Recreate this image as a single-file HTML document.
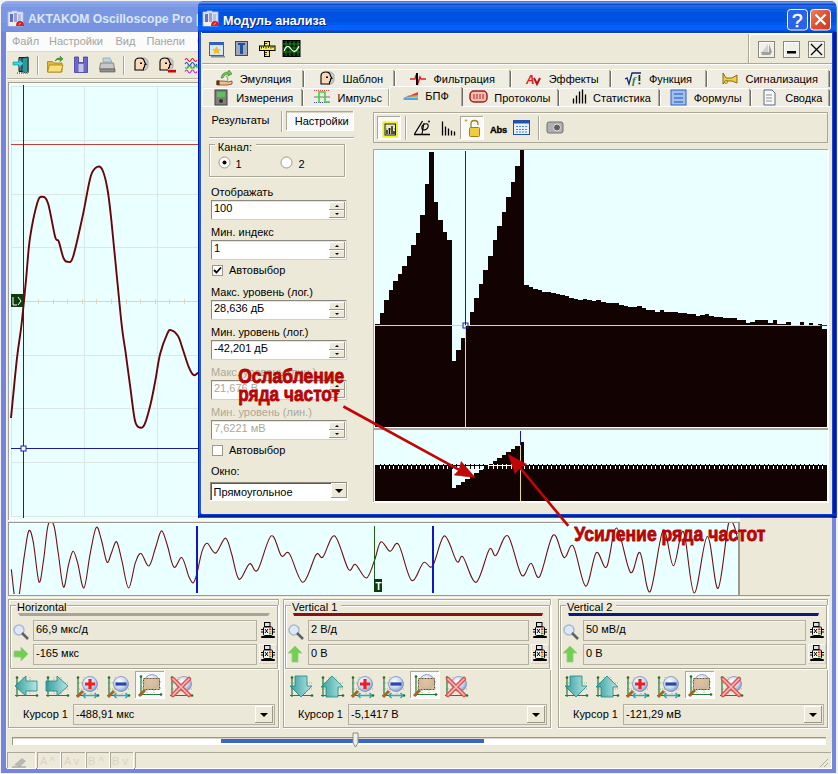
<!DOCTYPE html><html><head><meta charset="utf-8"><title>Модуль анализа</title><style>html,body{margin:0;padding:0;background:#ece9d8;overflow:hidden;width:838px;height:774px}svg{display:block}text{font-family:"Liberation Sans",sans-serif}</style></head><body><svg width="838" height="774" viewBox="0 0 838 774" font-family="Liberation Sans, sans-serif"><defs><linearGradient id="teal" x1="0" y1="0" x2="1" y2="0"><stop offset="0" stop-color="#2a9c9c"/><stop offset="1" stop-color="#b4e6e6"/></linearGradient><radialGradient id="glass" cx="0.4" cy="0.35" r="0.7"><stop offset="0" stop-color="#ffffff"/><stop offset="0.6" stop-color="#c8d8f0"/><stop offset="1" stop-color="#7890c8"/></radialGradient></defs>
<rect x="0" y="0" width="838" height="774" fill="#ece9d8" />
<defs><linearGradient id="tin" x1="0" y1="0" x2="0" y2="1"><stop offset="0" stop-color="#a9c0f0"/><stop offset="0.12" stop-color="#8aa6e6"/><stop offset="0.5" stop-color="#7c98e0"/><stop offset="1" stop-color="#7b95dd"/></linearGradient><linearGradient id="tact" x1="0" y1="0" x2="0" y2="1"><stop offset="0" stop-color="#3b8cff"/><stop offset="0.1" stop-color="#0a5ef0"/><stop offset="0.5" stop-color="#0552e6"/><stop offset="0.9" stop-color="#0446d8"/><stop offset="1" stop-color="#0338b8"/></linearGradient></defs>
<rect x="0" y="0" width="838" height="774" fill="#f2f2f2" />
<path d="M1,8 Q1,1.5 8,1.5 L829,1.5 Q836,1.5 836,8 L836,773 L1,773 Z" fill="#7584dc"/>
<clipPath id="mwclip"><path d="M1,8 Q1,1 8,1 L829,1 Q836,1 836,8 L836,773 L1,773 Z"/></clipPath>
<g clip-path="url(#mwclip)">
<rect x="0" y="0" width="838" height="1.5" fill="#a8acc8" />
<rect x="0" y="1.5" width="838" height="1" fill="#98b4f0" />
<rect x="0" y="2.5" width="838" height="2" fill="#8eacee" />
<rect x="0" y="4.5" width="838" height="3" fill="#829fe6" />
<rect x="0" y="7.5" width="838" height="16" fill="#7a97e1" />
<rect x="0" y="23.5" width="838" height="8" fill="#7894e0" />
<rect x="0" y="31.5" width="838" height="1" fill="#7090d8" />
</g>
<text x="28" y="23" font-size="12.2" fill="#dce6f8" font-weight="bold" >AKTAKOM Oscilloscope Pro |</text>
<path d="M8,12 h4 v-1 h5 v1 h6 v14 h-15z" fill="#dfe2f6" stroke="#b0c0f0" stroke-width="0.8"/><rect x="10" y="14" width="3" height="8" fill="#6070c0"/><rect x="14" y="13" width="3" height="9" fill="#9aa0d8"/><rect x="18" y="14" width="3" height="8" fill="#b8c0e8"/><rect x="9" y="22" width="7" height="4" fill="#f0f0e0"/><path d="M16,26 q0,-5 4,-5 q4,0 4,5z" fill="#d82020"/><path d="M19,25 q0,-2 2,-2" stroke="#f8a080" fill="none"/>
<rect x="1" y="32" width="5" height="741" fill="#7584dc" />
<rect x="6" y="32" width="1" height="736" fill="#f4f6fc" />
<rect x="832" y="32" width="4" height="741" fill="#7584dc" />
<rect x="1" y="769" width="835" height="4" fill="#7584dc" />
<rect x="6" y="767" width="826" height="1" fill="#f4f6fc" />
<rect x="7" y="32" width="825" height="736" fill="#ece9d8" />
<rect x="7" y="32" width="825" height="20" fill="#fbfbfa" />
<rect x="7" y="51" width="825" height="1" fill="#dcd9cc" />
<text x="12" y="45" font-size="11" fill="#a4a4a4" font-weight="normal" >Файл</text>
<text x="49" y="45" font-size="11" fill="#a4a4a4" font-weight="normal" >Настройки</text>
<text x="115.5" y="45" font-size="11" fill="#a4a4a4" font-weight="normal" >Вид</text>
<text x="146.5" y="45" font-size="11" fill="#a4a4a4" font-weight="normal" >Панели</text>
<text x="197" y="45" font-size="11" fill="#a4a4a4" font-weight="normal" >Справка</text>
<rect x="7" y="78" width="825" height="1" fill="#b8b4a4" />
<rect x="7" y="79" width="825" height="1" fill="#fafaf6" />
<rect x="37" y="56" width="1" height="19" fill="#aca899" />
<rect x="38" y="56" width="1" height="19" fill="#ffffff" />
<rect x="123" y="56" width="1" height="19" fill="#aca899" />
<rect x="124" y="56" width="1" height="19" fill="#ffffff" />
<path d="M19,57.5 h9 v14 h-9z" fill="#607080" stroke="#101820" stroke-width="1"/><path d="M22,58 l6,-1 v16 l-6,-1z" fill="#2a9a9a" stroke="#101820" stroke-width="0.8"/><path d="M13,62 h6 v-2.5 l4.5,4 -4.5,4 v-2.5 h-6z" fill="#30d8e8" stroke="#108898" stroke-width="0.6"/><path d="M17,73 h12" stroke="#909090" stroke-width="2" stroke-dasharray="1,1"/>
<path d="M47.5,61.5 h5 l1.5,1.5 h8 v9 h-14.5z" fill="#e0b840" stroke="#a88010" stroke-width="0.8"/><path d="M47.5,72 l2,-7 h13.5 l-2,7z" fill="#f8e078" stroke="#a88010" stroke-width="0.8"/><path d="M55,61 q2,-4 6,-3 l-1,-2 3,3 -3,2.5 0,-2 q-3,-0.5 -5,1.5z" fill="#38b038" stroke="#207020" stroke-width="0.5"/>
<path d="M74.5,57 h4 v5.5 h5 v-5.5 h4 v15.5 h-13z" fill="#6a68c8" stroke="#4040a0" stroke-width="0.8"/><rect x="78.5" y="64" width="5" height="8" fill="#c0c4e8"/>
<path d="M103,58 h7 l2,4 h-9z" fill="#b8d8f0" stroke="#8090a0" stroke-width="0.6"/><path d="M100.5,63 h13 l1,6 h-15z" fill="#c8c8c8" stroke="#707070" stroke-width="0.8"/><path d="M100,69 h15 v3 h-15z" fill="#909090" stroke="#505050" stroke-width="0.6"/>
<path d="M141,58 q5,-1 7,3 v6 l-2,3 h-5z" fill="#c8c8c8" stroke="#a0a0a0" stroke-width="0.8"/>
<path d="M135,62 q0,-4 5,-4 q4,0 4.5,4 l1.5,2.5 -1.5,0.5 v2 l-1,1 v2 h-8.5z" fill="#f8d8b8" stroke="#000" stroke-width="1.1"/><rect x="140" y="62.5" width="2" height="1.5" fill="#000"/>
<path d="M166,58 q5,-1 7,3 v6 l-2,3 h-5z" fill="#c8c8c8" stroke="#a0a0a0" stroke-width="0.8"/>
<path d="M160,62 q0,-4 5,-4 q4,0 4.5,4 l1.5,2.5 -1.5,0.5 v2 l-1,1 v2 h-8.5z" fill="#f8d8b8" stroke="#000" stroke-width="1.1"/><rect x="165" y="62.5" width="2" height="1.5" fill="#000"/>
<rect x="168" y="70" width="8" height="2.5" fill="#c80808" />
<rect x="168" y="69" width="8" height="1" fill="#f0d040" />
<path d="M185,60 q1.5,-3 3,0 t3,0 t3,0 t3,0" stroke="#d02020" fill="none" stroke-width="1.1"/><path d="M185,64 q1.5,-3 3,0 t3,0 t3,0 t3,0" stroke="#2040d0" fill="none" stroke-width="1.1"/><path d="M185,68 h3 v-2 h3 v2 h3 v-2 h3 v2" stroke="#20a020" fill="none" stroke-width="1.1"/><path d="M185,71.5 q1.5,-3 3,0 t3,0 t3,0 t3,0" stroke="#c020c0" fill="none" stroke-width="1.1"/>
<rect x="8" y="82" width="732" height="439" fill="#a4a096" />
<rect x="9" y="83" width="731" height="437" fill="#eaffff" />
<rect x="11" y="86" width="1" height="431" fill="#dce6e2" />
<rect x="84" y="86" width="1" height="431" fill="#dce6e2" />
<rect x="157" y="86" width="1" height="431" fill="#dce6e2" />
<rect x="229" y="86" width="1" height="431" fill="#dce6e2" />
<rect x="302" y="86" width="1" height="431" fill="#dce6e2" />
<rect x="375" y="86" width="1" height="431" fill="#dce6e2" />
<rect x="448" y="86" width="1" height="431" fill="#dce6e2" />
<rect x="521" y="86" width="1" height="431" fill="#dce6e2" />
<rect x="593" y="86" width="1" height="431" fill="#dce6e2" />
<rect x="666" y="86" width="1" height="431" fill="#dce6e2" />
<rect x="739" y="86" width="1" height="431" fill="#dce6e2" />
<rect x="11" y="86" width="728" height="1" fill="#dce6e2" />
<rect x="11" y="140" width="728" height="1" fill="#dce6e2" />
<rect x="11" y="194" width="728" height="1" fill="#dce6e2" />
<rect x="11" y="247" width="728" height="1" fill="#dce6e2" />
<rect x="11" y="301" width="728" height="1" fill="#dce6e2" />
<rect x="11" y="355" width="728" height="1" fill="#dce6e2" />
<rect x="11" y="408" width="728" height="1" fill="#dce6e2" />
<rect x="11" y="462" width="728" height="1" fill="#dce6e2" />
<rect x="11" y="516" width="728" height="1" fill="#dce6e2" />
<rect x="11" y="144" width="728" height="1" fill="#c83c3c" />
<rect x="24" y="301" width="715" height="1" fill="#e2d2b8" />
<rect x="38" y="299" width="1" height="5" fill="#e2d6c0" />
<rect x="53" y="299" width="1" height="5" fill="#e2d6c0" />
<rect x="67" y="299" width="1" height="5" fill="#e2d6c0" />
<rect x="82" y="299" width="1" height="5" fill="#e2d6c0" />
<rect x="96" y="299" width="1" height="5" fill="#e2d6c0" />
<rect x="111" y="299" width="1" height="5" fill="#e2d6c0" />
<rect x="126" y="299" width="1" height="5" fill="#e2d6c0" />
<rect x="140" y="299" width="1" height="5" fill="#e2d6c0" />
<rect x="155" y="299" width="1" height="5" fill="#e2d6c0" />
<rect x="169" y="299" width="1" height="5" fill="#e2d6c0" />
<rect x="184" y="299" width="1" height="5" fill="#e2d6c0" />
<rect x="199" y="299" width="1" height="5" fill="#e2d6c0" />
<rect x="213" y="299" width="1" height="5" fill="#e2d6c0" />
<rect x="228" y="299" width="1" height="5" fill="#e2d6c0" />
<rect x="242" y="299" width="1" height="5" fill="#e2d6c0" />
<rect x="257" y="299" width="1" height="5" fill="#e2d6c0" />
<rect x="272" y="299" width="1" height="5" fill="#e2d6c0" />
<rect x="286" y="299" width="1" height="5" fill="#e2d6c0" />
<rect x="301" y="299" width="1" height="5" fill="#e2d6c0" />
<rect x="315" y="299" width="1" height="5" fill="#e2d6c0" />
<rect x="330" y="299" width="1" height="5" fill="#e2d6c0" />
<rect x="345" y="299" width="1" height="5" fill="#e2d6c0" />
<rect x="359" y="299" width="1" height="5" fill="#e2d6c0" />
<rect x="374" y="299" width="1" height="5" fill="#e2d6c0" />
<rect x="388" y="299" width="1" height="5" fill="#e2d6c0" />
<rect x="403" y="299" width="1" height="5" fill="#e2d6c0" />
<rect x="418" y="299" width="1" height="5" fill="#e2d6c0" />
<rect x="432" y="299" width="1" height="5" fill="#e2d6c0" />
<rect x="447" y="299" width="1" height="5" fill="#e2d6c0" />
<rect x="461" y="299" width="1" height="5" fill="#e2d6c0" />
<rect x="476" y="299" width="1" height="5" fill="#e2d6c0" />
<rect x="491" y="299" width="1" height="5" fill="#e2d6c0" />
<rect x="505" y="299" width="1" height="5" fill="#e2d6c0" />
<rect x="520" y="299" width="1" height="5" fill="#e2d6c0" />
<rect x="534" y="299" width="1" height="5" fill="#e2d6c0" />
<rect x="549" y="299" width="1" height="5" fill="#e2d6c0" />
<rect x="564" y="299" width="1" height="5" fill="#e2d6c0" />
<rect x="578" y="299" width="1" height="5" fill="#e2d6c0" />
<rect x="593" y="299" width="1" height="5" fill="#e2d6c0" />
<rect x="607" y="299" width="1" height="5" fill="#e2d6c0" />
<rect x="622" y="299" width="1" height="5" fill="#e2d6c0" />
<rect x="637" y="299" width="1" height="5" fill="#e2d6c0" />
<rect x="651" y="299" width="1" height="5" fill="#e2d6c0" />
<rect x="666" y="299" width="1" height="5" fill="#e2d6c0" />
<rect x="680" y="299" width="1" height="5" fill="#e2d6c0" />
<rect x="695" y="299" width="1" height="5" fill="#e2d6c0" />
<rect x="710" y="299" width="1" height="5" fill="#e2d6c0" />
<rect x="724" y="299" width="1" height="5" fill="#e2d6c0" />
<rect x="739" y="299" width="1" height="5" fill="#e2d6c0" />
<rect x="753" y="299" width="1" height="5" fill="#e2d6c0" />
<rect x="23" y="85" width="1" height="433" fill="#1c1ca0" />
<rect x="11" y="448" width="728" height="1" fill="#1c1ca0" />
<clipPath id="scc"><rect x="9" y="83" width="731" height="436"/></clipPath><path clip-path="url(#scc)" d="M11,418 C12.0,408.1 15.1,374.6 16.9,358.8 C18.7,343.0 20.2,336.1 21.7,323 C23.2,309.9 24.6,294.2 26,280 C27.4,265.8 28.1,250.7 30,237.9 C31.9,225.1 35.2,210.0 37.2,203.2 C39.2,196.3 40.2,196.8 42,196.8 C43.8,196.8 45.8,196.5 48,203.2 C50.2,209.8 53.3,230.3 55.1,236.7 C56.9,243.1 57.3,237.8 58.7,241.4 C60.1,245.0 62.0,254.7 63.5,258.1 C65.0,261.5 65.9,261.9 67.5,261.7 C69.1,261.5 70.5,264.6 73,257 C75.5,249.4 79.6,229.9 82.6,216.4 C85.6,202.9 88.3,184.1 90.9,175.8 C93.5,167.5 96.0,167.5 98,166.7 C100.0,165.9 101.3,167.1 102.9,171 C104.5,174.9 106.2,182.0 107.6,190 C109.0,198.0 109.6,203.8 111.2,218.8 C112.8,233.8 115.4,261.9 117.2,280 C119.0,298.1 120.6,315.8 122,327.7 C123.4,339.6 124.1,341.7 125.5,351.6 C126.9,361.6 128.7,375.9 130.3,387.4 C131.9,398.9 133.4,414.1 135,420.8 C136.6,427.5 138.2,426.9 139.8,427.5 C141.4,428.1 142.8,428.3 144.6,424.4 C146.4,420.5 148.8,411.4 150.6,404 C152.4,396.6 153.8,388.5 155.4,380.2 C157.0,371.9 158.1,361.8 160.1,354 C162.1,346.2 165.5,337.7 167.3,333.7 C169.1,329.7 169.1,329.7 170.9,330.1 C172.7,330.5 176.0,332.8 178,336 C180.0,339.2 181.0,344.0 182.8,349.2 C184.6,354.4 187.0,362.8 188.8,367.1 C190.6,371.4 192.0,374.0 193.5,375 C195.0,376.0 195.9,374.2 197.8,373 C199.7,371.8 203.8,368.8 205,368" fill="none" stroke="#680606" stroke-width="1.9" stroke-linejoin="round"/>
<rect x="21" y="446" width="5" height="5" fill="#eaffff" stroke="#1c1ca0" stroke-width="1"/>
<rect x="11" y="294" width="12" height="13" fill="#0c3c0c" />
<path d="M13,297 v8 h4 M18,297 l3,4 -3,4" stroke="#fff" fill="none" stroke-width="1"/>
<rect x="8" y="520" width="732" height="1" fill="#ffffff" />
<rect x="8" y="522" width="732" height="74" fill="#9c9a90" />
<rect x="9" y="523" width="729" height="72" fill="#eaffff" />
<rect x="8" y="595" width="822" height="1" fill="#9c9a90" />
<rect x="8" y="597" width="822" height="1" fill="#ffffff" />
<clipPath id="ovc"><rect x="9" y="523" width="729" height="71"/></clipPath>
<path clip-path="url(#ovc)" d="M11.3,569.4 C12.2,575.3 14.8,607.3 17,605 C19.2,602.7 22.3,568.1 24.3,555.8 C26.3,543.4 27.3,533.2 28.8,530.9 C30.3,528.6 31.6,533.7 33.3,542.2 C35.0,550.7 37.3,578.9 39,581.9 C40.7,584.9 42.0,569.8 43.5,560.4 C45.0,551.0 46.4,531.1 48.1,525.2 C49.8,519.3 52.1,520.5 53.8,525.2 C55.5,529.9 56.7,543.2 58.3,553.5 C59.9,563.8 61.8,585.2 63.5,587.1 C65.2,589.0 66.9,570.9 68.5,564.9 C70.1,558.9 71.5,551.7 73,551.3 C74.5,550.9 75.8,556.5 77.6,562.6 C79.4,568.7 81.8,589.3 83.9,588 C86.0,586.7 88.0,564.8 90,554.7 C92.0,544.6 94.3,530.0 96.2,527.5 C98.1,525.0 99.6,534.2 101.4,540 C103.2,545.8 105.3,560.1 107,562.2 C108.7,564.3 110.0,555.8 111.6,552.4 C113.2,549.0 114.9,540.5 116.6,541.8 C118.3,543.1 119.8,552.7 121.8,560.4 C123.8,568.1 126.3,587.6 128.6,588 C130.9,588.4 133.3,568.4 135.4,562.6 C137.5,556.9 138.7,552.9 141,553.5 C143.3,554.1 146.5,567.1 149,566 C151.5,564.9 153.7,552.6 155.8,546.7 C157.9,540.9 159.6,531.3 161.5,530.9 C163.4,530.5 165.0,538.5 167.1,544.5 C169.2,550.5 171.4,565.0 173.9,567.2 C176.4,569.4 179.4,556.1 181.9,557.6 C184.4,559.1 186.8,572.0 188.7,576.2 C190.6,580.4 191.8,583.4 193.2,583 C194.5,582.6 195.3,579.3 196.8,574 C198.3,568.7 200.3,556.4 202,551.3 C203.7,546.2 204.9,543.0 207.2,543.3 C209.5,543.6 212.6,554.0 215.6,553.1 C218.6,552.2 222.8,538.0 225.4,538.1 C228.1,538.2 229.2,546.6 231.5,553.5 C233.8,560.4 236.0,577.5 239,579.2 C242.0,580.9 246.5,565.3 249.6,563.8 C252.7,562.3 254.0,574.8 257.6,570.1 C261.2,565.5 267.2,538.3 271.2,535.9 C275.2,533.5 278.4,552.9 281.4,555.8 C284.4,558.7 285.7,549.1 289.3,553.5 C292.9,557.9 298.4,582.1 302.9,582.3 C307.4,582.5 312.8,558.9 316.1,554.7 C319.4,550.5 319.8,560.1 322.9,557 C326.0,553.9 330.5,533.9 334.7,535.9 C338.9,537.9 344.8,564.2 348.3,569 C351.8,573.8 352.5,562.9 355.5,564.4 C358.5,565.9 363.2,578.7 366.4,578 C369.6,577.3 372.1,566.4 374.5,560.4 C376.9,554.4 378.3,543.3 380.9,541.8 C383.5,540.3 387.1,550.8 390,551.3 C392.9,551.8 395.0,539.7 398.6,544.5 C402.2,549.3 407.4,577.3 411.5,580.3 C415.6,583.3 420.0,565.0 423.5,562.6 C427.0,560.2 429.1,570.5 432.6,566 C436.1,561.5 440.4,536.6 444.4,535.9 C448.4,535.1 453.7,558.0 456.8,561.5 C459.9,565.0 459.8,553.5 463,557 C466.2,560.5 471.7,583.5 476.1,582.3 C480.5,581.0 486.0,554.0 489.3,549.5 C492.6,545.0 492.9,557.7 496,555.4 C499.1,553.1 503.6,532.6 507.9,535.9 C512.1,539.2 517.6,570.5 521.5,575.1 C525.4,579.7 528.0,563.0 531,563.3 C534.0,563.6 535.9,581.4 539.6,576.7 C543.3,572.0 549.1,538.2 553.2,535 C557.3,531.8 560.7,555.7 564,557.5 C567.3,559.3 569.6,541.2 573.2,546 C576.8,550.8 581.8,585.0 585.6,586.1 C589.5,587.2 592.8,555.9 596.3,552.7 C599.8,549.5 603.2,571.1 606.6,567 C610.0,562.9 612.6,527.1 616.6,528 C620.6,528.9 626.5,568.2 630.4,572.3 C634.3,576.4 636.7,549.5 640,552.7 C643.3,556.0 646.1,595.5 650,591.8 C653.9,588.1 659.2,534.8 663.1,530.5 C667.0,526.2 670.0,565.6 673.4,565.8 C676.8,566.0 679.9,527.2 683.4,531.7 C686.9,536.2 690.2,592.2 694.2,593 C698.2,593.8 703.3,537.2 707.3,536.5 C711.3,535.8 714.5,590.5 718,588.5 C721.5,586.5 725.7,535.2 728.3,524.5 C730.9,513.8 731.9,521.9 733.5,524.5 C735.1,527.1 737.2,537.4 738,540" fill="none" stroke="#6e1010" stroke-width="1.1"/>
<rect x="196" y="526" width="2" height="67" fill="#1414c8" />
<rect x="432" y="526" width="2" height="67" fill="#1414c8" />
<rect x="374" y="526" width="1" height="53" fill="#1c601c" />
<rect x="374" y="579" width="8" height="13" fill="#0c3c0c" />
<text x="375.5" y="590" font-size="10" fill="#fff" font-weight="bold" >T</text>
<rect x="8" y="599" width="272" height="1" fill="#aca899" />
<rect x="8" y="599" width="1" height="130" fill="#aca899" />
<rect x="9" y="600" width="270" height="1" fill="#ffffff" />
<rect x="9" y="600" width="1" height="128" fill="#ffffff" />
<rect x="8" y="728" width="272" height="1" fill="#ffffff" />
<rect x="279" y="599" width="1" height="130" fill="#ffffff" />
<rect x="9" y="727" width="270" height="1" fill="#aca899" />
<rect x="278" y="600" width="1" height="128" fill="#aca899" />
<rect x="10" y="605" width="6" height="1" fill="#aca899" />
<rect x="11" y="606" width="5" height="1" fill="#ffffff" />
<rect x="67" y="605" width="210" height="1" fill="#aca899" />
<rect x="67" y="606" width="210" height="1" fill="#ffffff" />
<rect x="10" y="605" width="1" height="63" fill="#aca899" />
<rect x="11" y="606" width="1" height="62" fill="#ffffff" />
<rect x="277" y="605" width="1" height="63" fill="#aca899" />
<rect x="278" y="605" width="1" height="64" fill="#ffffff" />
<rect x="10" y="668" width="268" height="1" fill="#aca899" />
<rect x="10" y="669" width="269" height="1" fill="#ffffff" />
<text x="17" y="610.5" font-size="11" fill="#000" font-weight="normal" >Horizontal</text>
<path d="M18,613 H270 l-2,3 H20z" fill="#a8a498"/>
<rect x="33" y="620" width="224" height="21" fill="#ebe8d9" />
<rect x="33" y="620" width="224" height="1" fill="#b4b0a0" />
<rect x="33" y="640" width="224" height="1" fill="#b4b0a0" />
<rect x="33" y="620" width="1" height="21" fill="#b4b0a0" />
<rect x="256" y="620" width="1" height="21" fill="#b4b0a0" />
<rect x="34" y="621" width="222" height="1" fill="#f6f4ec" />
<text x="36" y="633" font-size="11" fill="#000" font-weight="normal" >66,9 мкс/д</text>
<rect x="33" y="644" width="224" height="21" fill="#ebe8d9" />
<rect x="33" y="644" width="224" height="1" fill="#b4b0a0" />
<rect x="33" y="664" width="224" height="1" fill="#b4b0a0" />
<rect x="33" y="644" width="1" height="21" fill="#b4b0a0" />
<rect x="256" y="644" width="1" height="21" fill="#b4b0a0" />
<rect x="34" y="645" width="222" height="1" fill="#f6f4ec" />
<text x="36" y="657" font-size="11" fill="#000" font-weight="normal" >-165 мкс</text>
<rect x="264.5" y="622.5" width="5.5" height="4" fill="#e0e0e0" stroke="#000" stroke-width="1"/><rect x="263.5" y="627" width="9" height="8.5" rx="1" fill="#f4f4f4" stroke="#000" stroke-width="1"/><path d="M265,629 l3,4 M268,629 l-3,4" stroke="#000" stroke-width="1"/><rect x="269" y="628.5" width="2.5" height="1.6" fill="#e03020"/><rect x="269" y="630.6" width="2.5" height="1.6" fill="#f0a020"/><rect x="269" y="632.7" width="2.5" height="1.6" fill="#40a020"/><path d="M261,629.5 h2 M261,632 h2 M273,629.5 h2 M273,632 h2" stroke="#000" stroke-width="1"/><rect x="261" y="636" width="14" height="2" rx="1" fill="#000"/>
<rect x="259" y="644" width="18" height="1" fill="#f8f8f4" />
<rect x="259" y="644" width="1" height="20" fill="#f8f8f4" />
<rect x="259" y="663" width="18" height="1" fill="#d8d4c4" />
<rect x="276" y="644" width="1" height="20" fill="#d8d4c4" />
<rect x="264.5" y="645.5" width="5.5" height="4" fill="#e0e0e0" stroke="#000" stroke-width="1"/><rect x="263.5" y="650" width="9" height="8.5" rx="1" fill="#f4f4f4" stroke="#000" stroke-width="1"/><path d="M265,652 l3,4 M268,652 l-3,4" stroke="#000" stroke-width="1"/><rect x="269" y="651.5" width="2.5" height="1.6" fill="#e03020"/><rect x="269" y="653.6" width="2.5" height="1.6" fill="#f0a020"/><rect x="269" y="655.7" width="2.5" height="1.6" fill="#40a020"/><path d="M261,652.5 h2 M261,655 h2 M273,652.5 h2 M273,655 h2" stroke="#000" stroke-width="1"/><rect x="261" y="659" width="14" height="2" rx="1" fill="#000"/>
<circle cx="19" cy="630" r="5" fill="#dde8f8" stroke="#a8b8d8" stroke-width="1.5"/><path d="M22,633 l6,6" stroke="#606060" stroke-width="2.5"/>
<path d="M14,651 h7 v-4 l7,7 -7,7 v-4 h-7z" fill="#70d050" stroke="#a0c890" stroke-width="0.8"/>
<path d="M23,677 v20 M30,677 v20 M16,683 h22 M16,689 h22" stroke="#90c090" stroke-width="1" stroke-dasharray="1,1" fill="none"/>
<path d="M17,677 v20 M15,695.5 h23" stroke="#2a7a3a" stroke-width="1.2" fill="none"/><circle cx="17" cy="677.5" r="1.3" fill="#2a6a2a"/><circle cx="37" cy="695.5" r="1.3" fill="#2a6a2a"/>
<path d="M15,686 l11,-10 v5 h11 v10 h-11 v5z" fill="url(#teal)" stroke="#1c8484" stroke-width="0.8" fill-opacity="0.95"/>
<path d="M54,677 v20 M61,677 v20 M47,683 h22 M47,689 h22" stroke="#90c090" stroke-width="1" stroke-dasharray="1,1" fill="none"/>
<path d="M48,677 v20 M46,695.5 h23" stroke="#2a7a3a" stroke-width="1.2" fill="none"/><circle cx="48" cy="677.5" r="1.3" fill="#2a6a2a"/><circle cx="68" cy="695.5" r="1.3" fill="#2a6a2a"/>
<path d="M68,686 l-11,-10 v5 h-11 v10 h11 v5z" fill="url(#teal)" stroke="#1c8484" stroke-width="0.8" fill-opacity="0.95"/>
<path d="M84,677 v20 M91,677 v20 M77,683 h22 M77,689 h22" stroke="#90c090" stroke-width="1" stroke-dasharray="1,1" fill="none"/>
<path d="M78,677 v20 M76,695.5 h23" stroke="#2a7a3a" stroke-width="1.2" fill="none"/><circle cx="78" cy="677.5" r="1.3" fill="#2a6a2a"/><circle cx="98" cy="695.5" r="1.3" fill="#2a6a2a"/>
<circle cx="90" cy="684" r="7.5" fill="url(#glass)" stroke="#8090b8" stroke-width="0.8"/><path d="M77,697 l6,-6" stroke="#a06828" stroke-width="3"/><path d="M83,695.5 h14 M83,695.5 l2.5,-2.5 M83,695.5 l2.5,2.5 M97,695.5 l-2.5,-2.5 M97,695.5 l-2.5,2.5" stroke="#30a8b8" stroke-width="1.5" fill="none"/>
<path d="M90,679 v10 M85,684 h10" stroke="#e82020" stroke-width="3.2"/>
<path d="M115,677 v20 M122,677 v20 M108,683 h22 M108,689 h22" stroke="#90c090" stroke-width="1" stroke-dasharray="1,1" fill="none"/>
<path d="M109,677 v20 M107,695.5 h23" stroke="#2a7a3a" stroke-width="1.2" fill="none"/><circle cx="109" cy="677.5" r="1.3" fill="#2a6a2a"/><circle cx="129" cy="695.5" r="1.3" fill="#2a6a2a"/>
<circle cx="121" cy="684" r="7.5" fill="url(#glass)" stroke="#8090b8" stroke-width="0.8"/><path d="M108,697 l6,-6" stroke="#a06828" stroke-width="3"/><path d="M114,695.5 h14 M114,695.5 l2.5,-2.5 M114,695.5 l2.5,2.5 M128,695.5 l-2.5,-2.5 M128,695.5 l-2.5,2.5" stroke="#30a8b8" stroke-width="1.5" fill="none"/>
<path d="M115.5,684 h11" stroke="#2848a8" stroke-width="3.2"/>
<rect x="135" y="671" width="30" height="28" fill="url(#dith)" />
<rect x="135" y="671" width="30" height="1" fill="#aca899" />
<rect x="135" y="671" width="1" height="28" fill="#aca899" />
<rect x="135" y="698" width="30" height="1" fill="#ffffff" />
<rect x="164" y="671" width="1" height="28" fill="#ffffff" />
<path d="M147,676 v20 M154,676 v20 M140,682 h22 M140,688 h22" stroke="#90c090" stroke-width="1" stroke-dasharray="1,1" fill="none"/>
<path d="M141,676 v20 M139,694.5 h23" stroke="#2a7a3a" stroke-width="1.2" fill="none"/><circle cx="141" cy="676.5" r="1.3" fill="#2a6a2a"/><circle cx="161" cy="694.5" r="1.3" fill="#2a6a2a"/>
<circle cx="152" cy="682" r="7.5" fill="url(#glass)" stroke="#8090b8" stroke-width="0.8"/><rect x="143.5" y="678.5" width="16" height="11" fill="#d8b890" fill-opacity="0.85" stroke="#705030" stroke-dasharray="2,1"/><path d="M139,696 l6,-6" stroke="#a06828" stroke-width="3"/>
<path d="M178,677 v20 M185,677 v20 M171,683 h22 M171,689 h22" stroke="#90c090" stroke-width="1" stroke-dasharray="1,1" fill="none"/>
<path d="M172,677 v20 M170,695.5 h23" stroke="#2a7a3a" stroke-width="1.2" fill="none"/><circle cx="172" cy="677.5" r="1.3" fill="#2a6a2a"/><circle cx="192" cy="695.5" r="1.3" fill="#2a6a2a"/>
<circle cx="184" cy="684" r="7.5" fill="url(#glass)" stroke="#8090b8" stroke-width="0.8"/><path d="M173,679 l16,16 M189,679 l-16,16" stroke="#e05050" stroke-width="4.5" stroke-linecap="round"/><path d="M173,679 l16,16 M189,679 l-16,16" stroke="#ffc0c0" stroke-width="1.6" stroke-linecap="round"/>
<text x="23" y="718" font-size="11" fill="#000" font-weight="normal" >Курсор 1</text>
<rect x="73" y="704" width="202" height="21" fill="#ebe8d9" />
<rect x="73" y="704" width="202" height="1" fill="#b4b0a0" />
<rect x="73" y="724" width="202" height="1" fill="#b4b0a0" />
<rect x="73" y="704" width="1" height="21" fill="#b4b0a0" />
<rect x="274" y="704" width="1" height="21" fill="#b4b0a0" />
<rect x="74" y="705" width="200" height="1" fill="#f6f4ec" />
<text x="76" y="718" font-size="11" fill="#000" font-weight="normal" >-488,91 мкс</text>
<rect x="255" y="706" width="18" height="17" fill="#ece9d8" />
<rect x="255" y="706" width="18" height="1" fill="#ffffff" />
<rect x="255" y="706" width="1" height="17" fill="#ffffff" />
<rect x="255" y="722" width="18" height="1" fill="#9c9888" />
<rect x="272" y="706" width="1" height="17" fill="#9c9888" />
<path d="M260,713 h8 l-4,4z" fill="#000"/>
<rect x="283" y="599" width="269" height="1" fill="#aca899" />
<rect x="283" y="599" width="1" height="130" fill="#aca899" />
<rect x="284" y="600" width="267" height="1" fill="#ffffff" />
<rect x="284" y="600" width="1" height="128" fill="#ffffff" />
<rect x="283" y="728" width="269" height="1" fill="#ffffff" />
<rect x="551" y="599" width="1" height="130" fill="#ffffff" />
<rect x="284" y="727" width="267" height="1" fill="#aca899" />
<rect x="550" y="600" width="1" height="128" fill="#aca899" />
<rect x="285" y="605" width="6" height="1" fill="#aca899" />
<rect x="286" y="606" width="5" height="1" fill="#ffffff" />
<rect x="341" y="605" width="208" height="1" fill="#aca899" />
<rect x="341" y="606" width="208" height="1" fill="#ffffff" />
<rect x="285" y="605" width="1" height="63" fill="#aca899" />
<rect x="286" y="606" width="1" height="62" fill="#ffffff" />
<rect x="549" y="605" width="1" height="63" fill="#aca899" />
<rect x="550" y="605" width="1" height="64" fill="#ffffff" />
<rect x="285" y="668" width="265" height="1" fill="#aca899" />
<rect x="285" y="669" width="266" height="1" fill="#ffffff" />
<text x="292" y="610.5" font-size="11" fill="#000" font-weight="normal" >Vertical 1</text>
<path d="M293,613 H543 l-1,3 H294z" fill="#8b1010"/>
<rect x="308" y="620" width="221" height="21" fill="#ebe8d9" />
<rect x="308" y="620" width="221" height="1" fill="#b4b0a0" />
<rect x="308" y="640" width="221" height="1" fill="#b4b0a0" />
<rect x="308" y="620" width="1" height="21" fill="#b4b0a0" />
<rect x="528" y="620" width="1" height="21" fill="#b4b0a0" />
<rect x="309" y="621" width="219" height="1" fill="#f6f4ec" />
<text x="311" y="633" font-size="11" fill="#000" font-weight="normal" >2 В/д</text>
<rect x="308" y="644" width="221" height="21" fill="#ebe8d9" />
<rect x="308" y="644" width="221" height="1" fill="#b4b0a0" />
<rect x="308" y="664" width="221" height="1" fill="#b4b0a0" />
<rect x="308" y="644" width="1" height="21" fill="#b4b0a0" />
<rect x="528" y="644" width="1" height="21" fill="#b4b0a0" />
<rect x="309" y="645" width="219" height="1" fill="#f6f4ec" />
<text x="311" y="657" font-size="11" fill="#000" font-weight="normal" >0 В</text>
<rect x="536.5" y="622.5" width="5.5" height="4" fill="#e0e0e0" stroke="#000" stroke-width="1"/><rect x="535.5" y="627" width="9" height="8.5" rx="1" fill="#f4f4f4" stroke="#000" stroke-width="1"/><path d="M537,629 l3,4 M540,629 l-3,4" stroke="#000" stroke-width="1"/><rect x="541" y="628.5" width="2.5" height="1.6" fill="#e03020"/><rect x="541" y="630.6" width="2.5" height="1.6" fill="#f0a020"/><rect x="541" y="632.7" width="2.5" height="1.6" fill="#40a020"/><path d="M533,629.5 h2 M533,632 h2 M545,629.5 h2 M545,632 h2" stroke="#000" stroke-width="1"/><rect x="533" y="636" width="14" height="2" rx="1" fill="#000"/>
<rect x="531" y="644" width="18" height="1" fill="#f8f8f4" />
<rect x="531" y="644" width="1" height="20" fill="#f8f8f4" />
<rect x="531" y="663" width="18" height="1" fill="#d8d4c4" />
<rect x="548" y="644" width="1" height="20" fill="#d8d4c4" />
<rect x="536.5" y="645.5" width="5.5" height="4" fill="#e0e0e0" stroke="#000" stroke-width="1"/><rect x="535.5" y="650" width="9" height="8.5" rx="1" fill="#f4f4f4" stroke="#000" stroke-width="1"/><path d="M537,652 l3,4 M540,652 l-3,4" stroke="#000" stroke-width="1"/><rect x="541" y="651.5" width="2.5" height="1.6" fill="#e03020"/><rect x="541" y="653.6" width="2.5" height="1.6" fill="#f0a020"/><rect x="541" y="655.7" width="2.5" height="1.6" fill="#40a020"/><path d="M533,652.5 h2 M533,655 h2 M545,652.5 h2 M545,655 h2" stroke="#000" stroke-width="1"/><rect x="533" y="659" width="14" height="2" rx="1" fill="#000"/>
<circle cx="294" cy="630" r="5" fill="#dde8f8" stroke="#a8b8d8" stroke-width="1.5"/><path d="M297,633 l6,6" stroke="#606060" stroke-width="2.5"/>
<path d="M295,646 l7,7 h-4 v9 h-6 v-9 h-4z" fill="#70d050" stroke="#a0c890" stroke-width="0.8"/>
<path d="M298,677 v20 M305,677 v20 M291,683 h22 M291,689 h22" stroke="#90c090" stroke-width="1" stroke-dasharray="1,1" fill="none"/>
<path d="M292,677 v20 M290,695.5 h23" stroke="#2a7a3a" stroke-width="1.2" fill="none"/><circle cx="292" cy="677.5" r="1.3" fill="#2a6a2a"/><circle cx="312" cy="695.5" r="1.3" fill="#2a6a2a"/>
<path d="M301,697 l-11,-11 h5 v-10 h12 v10 h5z" fill="url(#teal)" stroke="#1c8484" stroke-width="0.8" fill-opacity="0.95"/>
<path d="M329,677 v20 M336,677 v20 M322,683 h22 M322,689 h22" stroke="#90c090" stroke-width="1" stroke-dasharray="1,1" fill="none"/>
<path d="M323,677 v20 M321,695.5 h23" stroke="#2a7a3a" stroke-width="1.2" fill="none"/><circle cx="323" cy="677.5" r="1.3" fill="#2a6a2a"/><circle cx="343" cy="695.5" r="1.3" fill="#2a6a2a"/>
<path d="M332,676 l-11,11 h5 v10 h12 v-10 h5z" fill="url(#teal)" stroke="#1c8484" stroke-width="0.8" fill-opacity="0.95"/>
<path d="M359,677 v20 M366,677 v20 M352,683 h22 M352,689 h22" stroke="#90c090" stroke-width="1" stroke-dasharray="1,1" fill="none"/>
<path d="M353,677 v20 M351,695.5 h23" stroke="#2a7a3a" stroke-width="1.2" fill="none"/><circle cx="353" cy="677.5" r="1.3" fill="#2a6a2a"/><circle cx="373" cy="695.5" r="1.3" fill="#2a6a2a"/>
<circle cx="365" cy="684" r="7.5" fill="url(#glass)" stroke="#8090b8" stroke-width="0.8"/><path d="M352,697 l6,-6" stroke="#a06828" stroke-width="3"/><path d="M358,695.5 h14 M358,695.5 l2.5,-2.5 M358,695.5 l2.5,2.5 M372,695.5 l-2.5,-2.5 M372,695.5 l-2.5,2.5" stroke="#30a8b8" stroke-width="1.5" fill="none"/>
<path d="M365,679 v10 M360,684 h10" stroke="#e82020" stroke-width="3.2"/>
<path d="M390,677 v20 M397,677 v20 M383,683 h22 M383,689 h22" stroke="#90c090" stroke-width="1" stroke-dasharray="1,1" fill="none"/>
<path d="M384,677 v20 M382,695.5 h23" stroke="#2a7a3a" stroke-width="1.2" fill="none"/><circle cx="384" cy="677.5" r="1.3" fill="#2a6a2a"/><circle cx="404" cy="695.5" r="1.3" fill="#2a6a2a"/>
<circle cx="396" cy="684" r="7.5" fill="url(#glass)" stroke="#8090b8" stroke-width="0.8"/><path d="M383,697 l6,-6" stroke="#a06828" stroke-width="3"/><path d="M389,695.5 h14 M389,695.5 l2.5,-2.5 M389,695.5 l2.5,2.5 M403,695.5 l-2.5,-2.5 M403,695.5 l-2.5,2.5" stroke="#30a8b8" stroke-width="1.5" fill="none"/>
<path d="M390.5,684 h11" stroke="#2848a8" stroke-width="3.2"/>
<rect x="410" y="671" width="30" height="28" fill="url(#dith)" />
<rect x="410" y="671" width="30" height="1" fill="#aca899" />
<rect x="410" y="671" width="1" height="28" fill="#aca899" />
<rect x="410" y="698" width="30" height="1" fill="#ffffff" />
<rect x="439" y="671" width="1" height="28" fill="#ffffff" />
<path d="M422,676 v20 M429,676 v20 M415,682 h22 M415,688 h22" stroke="#90c090" stroke-width="1" stroke-dasharray="1,1" fill="none"/>
<path d="M416,676 v20 M414,694.5 h23" stroke="#2a7a3a" stroke-width="1.2" fill="none"/><circle cx="416" cy="676.5" r="1.3" fill="#2a6a2a"/><circle cx="436" cy="694.5" r="1.3" fill="#2a6a2a"/>
<circle cx="427" cy="682" r="7.5" fill="url(#glass)" stroke="#8090b8" stroke-width="0.8"/><rect x="418.5" y="678.5" width="16" height="11" fill="#d8b890" fill-opacity="0.85" stroke="#705030" stroke-dasharray="2,1"/><path d="M414,696 l6,-6" stroke="#a06828" stroke-width="3"/>
<path d="M453,677 v20 M460,677 v20 M446,683 h22 M446,689 h22" stroke="#90c090" stroke-width="1" stroke-dasharray="1,1" fill="none"/>
<path d="M447,677 v20 M445,695.5 h23" stroke="#2a7a3a" stroke-width="1.2" fill="none"/><circle cx="447" cy="677.5" r="1.3" fill="#2a6a2a"/><circle cx="467" cy="695.5" r="1.3" fill="#2a6a2a"/>
<circle cx="459" cy="684" r="7.5" fill="url(#glass)" stroke="#8090b8" stroke-width="0.8"/><path d="M448,679 l16,16 M464,679 l-16,16" stroke="#e05050" stroke-width="4.5" stroke-linecap="round"/><path d="M448,679 l16,16 M464,679 l-16,16" stroke="#ffc0c0" stroke-width="1.6" stroke-linecap="round"/>
<text x="298" y="718" font-size="11" fill="#000" font-weight="normal" >Курсор 1</text>
<rect x="348" y="704" width="199" height="21" fill="#ebe8d9" />
<rect x="348" y="704" width="199" height="1" fill="#b4b0a0" />
<rect x="348" y="724" width="199" height="1" fill="#b4b0a0" />
<rect x="348" y="704" width="1" height="21" fill="#b4b0a0" />
<rect x="546" y="704" width="1" height="21" fill="#b4b0a0" />
<rect x="349" y="705" width="197" height="1" fill="#f6f4ec" />
<text x="351" y="718" font-size="11" fill="#000" font-weight="normal" >-5,1417 В</text>
<rect x="527" y="706" width="18" height="17" fill="#ece9d8" />
<rect x="527" y="706" width="18" height="1" fill="#ffffff" />
<rect x="527" y="706" width="1" height="17" fill="#ffffff" />
<rect x="527" y="722" width="18" height="1" fill="#9c9888" />
<rect x="544" y="706" width="1" height="17" fill="#9c9888" />
<path d="M532,713 h8 l-4,4z" fill="#000"/>
<rect x="558" y="599" width="271" height="1" fill="#aca899" />
<rect x="558" y="599" width="1" height="130" fill="#aca899" />
<rect x="559" y="600" width="269" height="1" fill="#ffffff" />
<rect x="559" y="600" width="1" height="128" fill="#ffffff" />
<rect x="558" y="728" width="271" height="1" fill="#ffffff" />
<rect x="828" y="599" width="1" height="130" fill="#ffffff" />
<rect x="559" y="727" width="269" height="1" fill="#aca899" />
<rect x="827" y="600" width="1" height="128" fill="#aca899" />
<rect x="560" y="605" width="6" height="1" fill="#aca899" />
<rect x="561" y="606" width="5" height="1" fill="#ffffff" />
<rect x="616" y="605" width="210" height="1" fill="#aca899" />
<rect x="616" y="606" width="210" height="1" fill="#ffffff" />
<rect x="560" y="605" width="1" height="63" fill="#aca899" />
<rect x="561" y="606" width="1" height="62" fill="#ffffff" />
<rect x="826" y="605" width="1" height="63" fill="#aca899" />
<rect x="827" y="605" width="1" height="64" fill="#ffffff" />
<rect x="560" y="668" width="267" height="1" fill="#aca899" />
<rect x="560" y="669" width="268" height="1" fill="#ffffff" />
<text x="567" y="610.5" font-size="11" fill="#000" font-weight="normal" >Vertical 2</text>
<path d="M568,613 H819 l-1,3 H569z" fill="#0c1880"/>
<rect x="583" y="620" width="223" height="21" fill="#ebe8d9" />
<rect x="583" y="620" width="223" height="1" fill="#b4b0a0" />
<rect x="583" y="640" width="223" height="1" fill="#b4b0a0" />
<rect x="583" y="620" width="1" height="21" fill="#b4b0a0" />
<rect x="805" y="620" width="1" height="21" fill="#b4b0a0" />
<rect x="584" y="621" width="221" height="1" fill="#f6f4ec" />
<text x="586" y="633" font-size="11" fill="#000" font-weight="normal" >50 мВ/д</text>
<rect x="583" y="644" width="223" height="21" fill="#ebe8d9" />
<rect x="583" y="644" width="223" height="1" fill="#b4b0a0" />
<rect x="583" y="664" width="223" height="1" fill="#b4b0a0" />
<rect x="583" y="644" width="1" height="21" fill="#b4b0a0" />
<rect x="805" y="644" width="1" height="21" fill="#b4b0a0" />
<rect x="584" y="645" width="221" height="1" fill="#f6f4ec" />
<text x="586" y="657" font-size="11" fill="#000" font-weight="normal" >0 В</text>
<rect x="813.5" y="622.5" width="5.5" height="4" fill="#e0e0e0" stroke="#000" stroke-width="1"/><rect x="812.5" y="627" width="9" height="8.5" rx="1" fill="#f4f4f4" stroke="#000" stroke-width="1"/><path d="M814,629 l3,4 M817,629 l-3,4" stroke="#000" stroke-width="1"/><rect x="818" y="628.5" width="2.5" height="1.6" fill="#e03020"/><rect x="818" y="630.6" width="2.5" height="1.6" fill="#f0a020"/><rect x="818" y="632.7" width="2.5" height="1.6" fill="#40a020"/><path d="M810,629.5 h2 M810,632 h2 M822,629.5 h2 M822,632 h2" stroke="#000" stroke-width="1"/><rect x="810" y="636" width="14" height="2" rx="1" fill="#000"/>
<rect x="808" y="644" width="18" height="1" fill="#f8f8f4" />
<rect x="808" y="644" width="1" height="20" fill="#f8f8f4" />
<rect x="808" y="663" width="18" height="1" fill="#d8d4c4" />
<rect x="825" y="644" width="1" height="20" fill="#d8d4c4" />
<rect x="813.5" y="645.5" width="5.5" height="4" fill="#e0e0e0" stroke="#000" stroke-width="1"/><rect x="812.5" y="650" width="9" height="8.5" rx="1" fill="#f4f4f4" stroke="#000" stroke-width="1"/><path d="M814,652 l3,4 M817,652 l-3,4" stroke="#000" stroke-width="1"/><rect x="818" y="651.5" width="2.5" height="1.6" fill="#e03020"/><rect x="818" y="653.6" width="2.5" height="1.6" fill="#f0a020"/><rect x="818" y="655.7" width="2.5" height="1.6" fill="#40a020"/><path d="M810,652.5 h2 M810,655 h2 M822,652.5 h2 M822,655 h2" stroke="#000" stroke-width="1"/><rect x="810" y="659" width="14" height="2" rx="1" fill="#000"/>
<circle cx="569" cy="630" r="5" fill="#dde8f8" stroke="#a8b8d8" stroke-width="1.5"/><path d="M572,633 l6,6" stroke="#606060" stroke-width="2.5"/>
<path d="M570,646 l7,7 h-4 v9 h-6 v-9 h-4z" fill="#70d050" stroke="#a0c890" stroke-width="0.8"/>
<path d="M573,677 v20 M580,677 v20 M566,683 h22 M566,689 h22" stroke="#90c090" stroke-width="1" stroke-dasharray="1,1" fill="none"/>
<path d="M567,677 v20 M565,695.5 h23" stroke="#2a7a3a" stroke-width="1.2" fill="none"/><circle cx="567" cy="677.5" r="1.3" fill="#2a6a2a"/><circle cx="587" cy="695.5" r="1.3" fill="#2a6a2a"/>
<path d="M576,697 l-11,-11 h5 v-10 h12 v10 h5z" fill="url(#teal)" stroke="#1c8484" stroke-width="0.8" fill-opacity="0.95"/>
<path d="M604,677 v20 M611,677 v20 M597,683 h22 M597,689 h22" stroke="#90c090" stroke-width="1" stroke-dasharray="1,1" fill="none"/>
<path d="M598,677 v20 M596,695.5 h23" stroke="#2a7a3a" stroke-width="1.2" fill="none"/><circle cx="598" cy="677.5" r="1.3" fill="#2a6a2a"/><circle cx="618" cy="695.5" r="1.3" fill="#2a6a2a"/>
<path d="M607,676 l-11,11 h5 v10 h12 v-10 h5z" fill="url(#teal)" stroke="#1c8484" stroke-width="0.8" fill-opacity="0.95"/>
<path d="M634,677 v20 M641,677 v20 M627,683 h22 M627,689 h22" stroke="#90c090" stroke-width="1" stroke-dasharray="1,1" fill="none"/>
<path d="M628,677 v20 M626,695.5 h23" stroke="#2a7a3a" stroke-width="1.2" fill="none"/><circle cx="628" cy="677.5" r="1.3" fill="#2a6a2a"/><circle cx="648" cy="695.5" r="1.3" fill="#2a6a2a"/>
<circle cx="640" cy="684" r="7.5" fill="url(#glass)" stroke="#8090b8" stroke-width="0.8"/><path d="M627,697 l6,-6" stroke="#a06828" stroke-width="3"/><path d="M633,695.5 h14 M633,695.5 l2.5,-2.5 M633,695.5 l2.5,2.5 M647,695.5 l-2.5,-2.5 M647,695.5 l-2.5,2.5" stroke="#30a8b8" stroke-width="1.5" fill="none"/>
<path d="M640,679 v10 M635,684 h10" stroke="#e82020" stroke-width="3.2"/>
<path d="M665,677 v20 M672,677 v20 M658,683 h22 M658,689 h22" stroke="#90c090" stroke-width="1" stroke-dasharray="1,1" fill="none"/>
<path d="M659,677 v20 M657,695.5 h23" stroke="#2a7a3a" stroke-width="1.2" fill="none"/><circle cx="659" cy="677.5" r="1.3" fill="#2a6a2a"/><circle cx="679" cy="695.5" r="1.3" fill="#2a6a2a"/>
<circle cx="671" cy="684" r="7.5" fill="url(#glass)" stroke="#8090b8" stroke-width="0.8"/><path d="M658,697 l6,-6" stroke="#a06828" stroke-width="3"/><path d="M664,695.5 h14 M664,695.5 l2.5,-2.5 M664,695.5 l2.5,2.5 M678,695.5 l-2.5,-2.5 M678,695.5 l-2.5,2.5" stroke="#30a8b8" stroke-width="1.5" fill="none"/>
<path d="M665.5,684 h11" stroke="#2848a8" stroke-width="3.2"/>
<rect x="685" y="671" width="30" height="28" fill="url(#dith)" />
<rect x="685" y="671" width="30" height="1" fill="#aca899" />
<rect x="685" y="671" width="1" height="28" fill="#aca899" />
<rect x="685" y="698" width="30" height="1" fill="#ffffff" />
<rect x="714" y="671" width="1" height="28" fill="#ffffff" />
<path d="M697,676 v20 M704,676 v20 M690,682 h22 M690,688 h22" stroke="#90c090" stroke-width="1" stroke-dasharray="1,1" fill="none"/>
<path d="M691,676 v20 M689,694.5 h23" stroke="#2a7a3a" stroke-width="1.2" fill="none"/><circle cx="691" cy="676.5" r="1.3" fill="#2a6a2a"/><circle cx="711" cy="694.5" r="1.3" fill="#2a6a2a"/>
<circle cx="702" cy="682" r="7.5" fill="url(#glass)" stroke="#8090b8" stroke-width="0.8"/><rect x="693.5" y="678.5" width="16" height="11" fill="#d8b890" fill-opacity="0.85" stroke="#705030" stroke-dasharray="2,1"/><path d="M689,696 l6,-6" stroke="#a06828" stroke-width="3"/>
<path d="M728,677 v20 M735,677 v20 M721,683 h22 M721,689 h22" stroke="#90c090" stroke-width="1" stroke-dasharray="1,1" fill="none"/>
<path d="M722,677 v20 M720,695.5 h23" stroke="#2a7a3a" stroke-width="1.2" fill="none"/><circle cx="722" cy="677.5" r="1.3" fill="#2a6a2a"/><circle cx="742" cy="695.5" r="1.3" fill="#2a6a2a"/>
<circle cx="734" cy="684" r="7.5" fill="url(#glass)" stroke="#8090b8" stroke-width="0.8"/><path d="M723,679 l16,16 M739,679 l-16,16" stroke="#e05050" stroke-width="4.5" stroke-linecap="round"/><path d="M723,679 l16,16 M739,679 l-16,16" stroke="#ffc0c0" stroke-width="1.6" stroke-linecap="round"/>
<text x="573" y="718" font-size="11" fill="#000" font-weight="normal" >Курсор 1</text>
<rect x="623" y="704" width="201" height="21" fill="#ebe8d9" />
<rect x="623" y="704" width="201" height="1" fill="#b4b0a0" />
<rect x="623" y="724" width="201" height="1" fill="#b4b0a0" />
<rect x="623" y="704" width="1" height="21" fill="#b4b0a0" />
<rect x="823" y="704" width="1" height="21" fill="#b4b0a0" />
<rect x="624" y="705" width="199" height="1" fill="#f6f4ec" />
<text x="626" y="718" font-size="11" fill="#000" font-weight="normal" >-121,29 мВ</text>
<rect x="804" y="706" width="18" height="17" fill="#ece9d8" />
<rect x="804" y="706" width="18" height="1" fill="#ffffff" />
<rect x="804" y="706" width="1" height="17" fill="#ffffff" />
<rect x="804" y="722" width="18" height="1" fill="#9c9888" />
<rect x="821" y="706" width="1" height="17" fill="#9c9888" />
<path d="M809,713 h8 l-4,4z" fill="#000"/>
<rect x="12" y="737" width="814" height="8" fill="#ffffff" />
<rect x="12" y="737" width="814" height="1" fill="#9c9888" />
<rect x="12" y="737" width="1" height="8" fill="#9c9888" />
<rect x="13" y="738" width="813" height="1" fill="#d8d4c8" />
<rect x="221" y="739" width="263" height="4" fill="#3a66c8" />
<path d="M353,733 h5 v10 l-2.5,4 l-2.5,-4z" fill="#f0f0ea" stroke="#8a8a80" stroke-width="1"/>
<rect x="7" y="752" width="29" height="1" fill="#aca899" />
<rect x="7" y="752" width="1" height="17" fill="#aca899" />
<rect x="7" y="768" width="29" height="1" fill="#ffffff" />
<rect x="35" y="752" width="1" height="17" fill="#ffffff" />
<rect x="37" y="752" width="24" height="1" fill="#aca899" />
<rect x="37" y="752" width="1" height="17" fill="#aca899" />
<rect x="37" y="768" width="24" height="1" fill="#ffffff" />
<rect x="60" y="752" width="1" height="17" fill="#ffffff" />
<rect x="61" y="752" width="25" height="1" fill="#aca899" />
<rect x="61" y="752" width="1" height="17" fill="#aca899" />
<rect x="61" y="768" width="25" height="1" fill="#ffffff" />
<rect x="85" y="752" width="1" height="17" fill="#ffffff" />
<rect x="86" y="752" width="24" height="1" fill="#aca899" />
<rect x="86" y="752" width="1" height="17" fill="#aca899" />
<rect x="86" y="768" width="24" height="1" fill="#ffffff" />
<rect x="109" y="752" width="1" height="17" fill="#ffffff" />
<rect x="110" y="752" width="24" height="1" fill="#aca899" />
<rect x="110" y="752" width="1" height="17" fill="#aca899" />
<rect x="110" y="768" width="24" height="1" fill="#ffffff" />
<rect x="133" y="752" width="1" height="17" fill="#ffffff" />
<rect x="135" y="752" width="697" height="1" fill="#aca899" />
<rect x="135" y="752" width="1" height="17" fill="#aca899" />
<rect x="135" y="768" width="697" height="1" fill="#ffffff" />
<rect x="831" y="752" width="1" height="17" fill="#ffffff" />
<path d="M14,765 l8,-7 4,3 -6,6z" fill="#b8b8b8"/><path d="M12,767 h14" stroke="#909090"/>
<text x="40" y="765" font-size="11" fill="#d6d2c4" font-weight="normal" >A ^</text>
<text x="64" y="765" font-size="11" fill="#d6d2c4" font-weight="normal" >A v</text>
<text x="88" y="765" font-size="11" fill="#d6d2c4" font-weight="normal" >B ^</text>
<text x="112" y="765" font-size="11" fill="#d6d2c4" font-weight="normal" >B v</text>
<path d="M820,767 l8,-8" stroke="#b0ac9c" stroke-width="1"/>
<path d="M824,767 l4,-4" stroke="#b0ac9c" stroke-width="1"/>
<path d="M828,767 l0,-0" stroke="#b0ac9c" stroke-width="1"/>
<clipPath id="dlgclip"><path d="M198,8 Q198,1 205,1 L830,1 Q836.5,1 836.5,8 L836.5,517.5 L198,517.5 Z"/></clipPath>
<g clip-path="url(#dlgclip)">
<rect x="198" y="0" width="639" height="518" fill="#0832c8" />
<rect x="198" y="0" width="639" height="1.5" fill="#6070a8" />
<rect x="198" y="1.5" width="639" height="1" fill="#6aa0f8" />
<rect x="198" y="2.5" width="639" height="1" fill="#8cc0ff" />
<rect x="198" y="3.5" width="639" height="1" fill="#2a6ae0" />
<rect x="198" y="4.5" width="639" height="1" fill="#0a48c8" />
<rect x="198" y="5.5" width="639" height="1" fill="#3a88fa" />
<rect x="198" y="6.5" width="639" height="1" fill="#2a78f4" />
<rect x="198" y="7.5" width="639" height="2" fill="#1464ea" />
<rect x="198" y="9.5" width="639" height="3" fill="#0a5ae6" />
<rect x="198" y="12.5" width="639" height="9" fill="#0052e2" />
<rect x="198" y="21.5" width="639" height="3" fill="#0058ec" />
<rect x="198" y="24.5" width="639" height="6" fill="#0062f8" />
<rect x="198" y="30.5" width="639" height="1" fill="#0a56e0" />
<rect x="198" y="31.5" width="639" height="1.5" fill="#0840b8" />
</g>
<rect x="198" y="32" width="1" height="486" fill="#0019a8" />
<rect x="199" y="32" width="2" height="482" fill="#1a56e8" />
<rect x="201" y="32" width="1" height="482" fill="#f0f2fa" />
<rect x="831.5" y="32" width="5" height="486" fill="#1a48d8" />
<rect x="833" y="32" width="3.5" height="486" fill="#001c98" />
<rect x="831" y="33" width="1" height="481" fill="#f4f4f0" />
<rect x="198" y="513.5" width="638" height="2" fill="#0a3cd0" />
<rect x="198" y="515.5" width="638" height="2" fill="#001c90" />
<rect x="202" y="33" width="630" height="481" fill="#ece9d8" />
<rect x="202" y="33" width="630" height="1" fill="#f8f8f4" />
<path d="M203,12 h4 v-1 h5 v1 h6 v14 h-15z" fill="#dfe2f6" stroke="#b0c0f0" stroke-width="0.8"/><rect x="205" y="14" width="3" height="8" fill="#6070c0"/><rect x="209" y="13" width="3" height="9" fill="#9aa0d8"/><rect x="213" y="14" width="3" height="8" fill="#b8c0e8"/><rect x="204" y="22" width="7" height="4" fill="#f0f0e0"/><path d="M211,26 q0,-5 4,-5 q4,0 4,5z" fill="#d82020"/><path d="M214,25 q0,-2 2,-2" stroke="#f8a080" fill="none"/>
<text x="224" y="26" font-size="12.6" fill="#0a1e78" font-weight="bold" >Модуль анализа</text>
<text x="223" y="25" font-size="12.6" fill="#ffffff" font-weight="bold" >Модуль анализа</text>
<rect x="787.5" y="9.5" width="20" height="20.5" rx="3" fill="#2a62e8" stroke="#ffffff" stroke-width="1"/>
<text x="792" y="27" font-size="19" font-weight="normal" fill="#ffffff" stroke="#ffffff" stroke-width="0.5">?</text>
<defs><linearGradient id="cls" x1="0" y1="0" x2="1" y2="1"><stop offset="0" stop-color="#f08060"/><stop offset="0.5" stop-color="#e05030"/><stop offset="1" stop-color="#c83c18"/></linearGradient></defs>
<rect x="810.5" y="9.5" width="20" height="20.5" rx="3" fill="url(#cls)" stroke="#ffffff" stroke-width="1"/>
<path d="M815.5,14.5 L825.5,24.5 M825.5,14.5 L815.5,24.5" stroke="#ffffff" stroke-width="2.2"/>
<rect x="202" y="63" width="630" height="1" fill="#aca899" />
<rect x="202" y="64" width="630" height="1" fill="#ffffff" />
<rect x="748" y="34" width="1" height="29" fill="#aca899" />
<rect x="749" y="34" width="1" height="29" fill="#ffffff" />
<rect x="749" y="34" width="83" height="1" fill="#ffffff" />
<rect x="209.5" y="42.5" width="14" height="13" fill="#d8e8f8" stroke="#3060c0"/><rect x="209" y="42" width="15" height="3" fill="#3060c0"/><path d="M216.5,46 l1.5,3 3,0.3 -2.3,2 0.8,3 -3,-1.6 -3,1.6 0.8,-3 -2.3,-2 3,-0.3z" fill="#f0c020"/><rect x="211" y="56" width="14" height="1.5" fill="#8090a0"/>
<rect x="235.5" y="41.5" width="12" height="14" fill="#a0a8b8" stroke="#404850"/><rect x="240" y="43" width="3" height="11" fill="#2050a0"/><rect x="238" y="43" width="7" height="2" fill="#2050a0"/>
<rect x="264.5" y="41.5" width="5" height="15" fill="#f4ec50" stroke="#000" stroke-width="1"/><rect x="259.5" y="46" width="15.5" height="4.5" fill="#f4ec50" stroke="#000" stroke-width="1"/><path d="M261.5,46.5 v2 M263.5,46.5 v1.5 M266,46.5 v2 M268.5,46.5 v1.5 M271,46.5 v2 M273,46.5 v1.5 M265,43.5 h2 M265,52.5 h2 M265,54.5 h1.5" stroke="#000" stroke-width="0.8"/>
<rect x="283" y="40.5" width="17" height="16" fill="#001800" stroke="#000"/><path d="M286,41 v15 M290,41 v15 M294,41 v15 M298,41 v15 M283,44 h17 M283,48 h17 M283,52 h17" stroke="#20a020" stroke-width="0.8"/><path d="M284,51 q3,-8 7,-2 t8,-3" stroke="#ffffff" fill="none" stroke-width="1.2"/>
<rect x="758" y="41" width="17" height="17" fill="#f0efe8" />
<rect x="758" y="41" width="17" height="1" fill="#8a877a" />
<rect x="758" y="57" width="17" height="1" fill="#8a877a" />
<rect x="758" y="41" width="1" height="17" fill="#8a877a" />
<rect x="774" y="41" width="1" height="17" fill="#8a877a" />
<rect x="759" y="42" width="15" height="1" fill="#ffffff" />
<rect x="759" y="42" width="1" height="15" fill="#ffffff" />
<path d="M761,52 h11 l-2,3 h-8z" fill="#a0a0a0"/><path d="M768,44 v8 h-6z" fill="#d0d0d0"/><path d="M769,44 v8 h3z" fill="#a0a0a0"/>
<rect x="783" y="41" width="17" height="17" fill="#f0efe8" />
<rect x="783" y="41" width="17" height="1" fill="#8a877a" />
<rect x="783" y="57" width="17" height="1" fill="#8a877a" />
<rect x="783" y="41" width="1" height="17" fill="#8a877a" />
<rect x="799" y="41" width="1" height="17" fill="#8a877a" />
<rect x="784" y="42" width="15" height="1" fill="#ffffff" />
<rect x="784" y="42" width="1" height="15" fill="#ffffff" />
<rect x="787" y="51" width="9" height="2.5" fill="#000"/>
<rect x="808" y="41" width="17" height="17" fill="#f0efe8" />
<rect x="808" y="41" width="17" height="1" fill="#8a877a" />
<rect x="808" y="57" width="17" height="1" fill="#8a877a" />
<rect x="808" y="41" width="1" height="17" fill="#8a877a" />
<rect x="824" y="41" width="1" height="17" fill="#8a877a" />
<rect x="809" y="42" width="15" height="1" fill="#ffffff" />
<rect x="809" y="42" width="1" height="15" fill="#ffffff" />
<path d="M811,44 l11,11 M822,44 l-11,11" stroke="#000" stroke-width="1.3"/>
<rect x="202" y="106" width="630" height="1" fill="#ffffff" />
<rect x="202" y="69" width="102" height="18" fill="#efede2" />
<rect x="203" y="69" width="99" height="1" fill="#ffffff" />
<rect x="202" y="70" width="1" height="17" fill="#ffffff" />
<rect x="302" y="70" width="1" height="17" fill="#aca899" />
<rect x="303" y="71" width="1" height="16" fill="#716f64" />
<text x="239.8" y="83" font-size="11" fill="#000" font-weight="normal" >Эмуляция</text>
<rect x="304" y="69" width="91" height="18" fill="#efede2" />
<rect x="305" y="69" width="88" height="1" fill="#ffffff" />
<rect x="304" y="70" width="1" height="17" fill="#ffffff" />
<rect x="393" y="70" width="1" height="17" fill="#aca899" />
<rect x="394" y="71" width="1" height="16" fill="#716f64" />
<text x="342.4" y="83" font-size="11" fill="#000" font-weight="normal" >Шаблон</text>
<rect x="395" y="69" width="116" height="18" fill="#efede2" />
<rect x="396" y="69" width="113" height="1" fill="#ffffff" />
<rect x="395" y="70" width="1" height="17" fill="#ffffff" />
<rect x="509" y="70" width="1" height="17" fill="#aca899" />
<rect x="510" y="71" width="1" height="16" fill="#716f64" />
<text x="433.4" y="83" font-size="11" fill="#000" font-weight="normal" >Фильтрация</text>
<rect x="511" y="69" width="100" height="18" fill="#efede2" />
<rect x="512" y="69" width="97" height="1" fill="#ffffff" />
<rect x="511" y="70" width="1" height="17" fill="#ffffff" />
<rect x="609" y="70" width="1" height="17" fill="#aca899" />
<rect x="610" y="71" width="1" height="16" fill="#716f64" />
<text x="548.7" y="83" font-size="11" fill="#000" font-weight="normal" >Эффекты</text>
<rect x="611" y="69" width="96" height="18" fill="#efede2" />
<rect x="612" y="69" width="93" height="1" fill="#ffffff" />
<rect x="611" y="70" width="1" height="17" fill="#ffffff" />
<rect x="705" y="70" width="1" height="17" fill="#aca899" />
<rect x="706" y="71" width="1" height="16" fill="#716f64" />
<text x="648.9" y="83" font-size="11" fill="#000" font-weight="normal" >Функция</text>
<rect x="707" y="69" width="123" height="18" fill="#efede2" />
<rect x="708" y="69" width="120" height="1" fill="#ffffff" />
<rect x="707" y="70" width="1" height="17" fill="#ffffff" />
<rect x="828" y="70" width="1" height="17" fill="#aca899" />
<rect x="829" y="71" width="1" height="16" fill="#716f64" />
<text x="745.5" y="83" font-size="11" fill="#000" font-weight="normal" >Сигнализация</text>
<rect x="202" y="88" width="101" height="18" fill="#efede2" />
<rect x="203" y="88" width="98" height="1" fill="#ffffff" />
<rect x="202" y="89" width="1" height="17" fill="#ffffff" />
<rect x="301" y="89" width="1" height="17" fill="#aca899" />
<rect x="302" y="90" width="1" height="16" fill="#716f64" />
<text x="236.2" y="102" font-size="11" fill="#000" font-weight="normal" >Измерения</text>
<rect x="303" y="88" width="87" height="18" fill="#efede2" />
<rect x="304" y="88" width="84" height="1" fill="#ffffff" />
<rect x="303" y="89" width="1" height="17" fill="#ffffff" />
<rect x="388" y="89" width="1" height="17" fill="#aca899" />
<rect x="389" y="90" width="1" height="16" fill="#716f64" />
<text x="337.6" y="102" font-size="11" fill="#000" font-weight="normal" >Импульс</text>
<rect x="462" y="88" width="97" height="18" fill="#efede2" />
<rect x="463" y="88" width="94" height="1" fill="#ffffff" />
<rect x="462" y="89" width="1" height="17" fill="#ffffff" />
<rect x="557" y="89" width="1" height="17" fill="#aca899" />
<rect x="558" y="90" width="1" height="16" fill="#716f64" />
<text x="494.3" y="102" font-size="11" fill="#000" font-weight="normal" >Протоколы</text>
<rect x="559" y="88" width="101" height="18" fill="#efede2" />
<rect x="560" y="88" width="98" height="1" fill="#ffffff" />
<rect x="559" y="89" width="1" height="17" fill="#ffffff" />
<rect x="658" y="89" width="1" height="17" fill="#aca899" />
<rect x="659" y="90" width="1" height="16" fill="#716f64" />
<text x="593.1" y="102" font-size="11" fill="#000" font-weight="normal" >Статистика</text>
<rect x="660" y="88" width="91" height="18" fill="#efede2" />
<rect x="661" y="88" width="88" height="1" fill="#ffffff" />
<rect x="660" y="89" width="1" height="17" fill="#ffffff" />
<rect x="749" y="89" width="1" height="17" fill="#aca899" />
<rect x="750" y="90" width="1" height="16" fill="#716f64" />
<text x="693.75" y="102" font-size="11" fill="#000" font-weight="normal" >Формулы</text>
<rect x="751" y="88" width="79" height="18" fill="#efede2" />
<rect x="752" y="88" width="76" height="1" fill="#ffffff" />
<rect x="751" y="89" width="1" height="17" fill="#ffffff" />
<rect x="828" y="89" width="1" height="17" fill="#aca899" />
<rect x="829" y="90" width="1" height="16" fill="#716f64" />
<text x="785.2" y="102" font-size="11" fill="#000" font-weight="normal" >Сводка</text>
<rect x="389" y="86" width="74" height="22" fill="#ece9d8" />
<rect x="390" y="86" width="71" height="1" fill="#ffffff" />
<rect x="389" y="87" width="1" height="20" fill="#ffffff" />
<rect x="461" y="87" width="1" height="19" fill="#aca899" />
<rect x="462" y="88" width="1" height="18" fill="#716f64" />
<text x="425.3" y="99.5" font-size="11" fill="#000" font-weight="normal" >БПФ</text>
<path d="M221,78 q1,-6 7,-6 l1,-2 3,4 -4,2 0,-2 q-4,0 -5,4z" fill="#70c050" stroke="#308030" stroke-width="0.6"/><path d="M226,76 q3,2 1,5" stroke="#80c060" stroke-width="1.2" fill="none"/><path d="M217,81 h5 q4,0 6,1 l4,-1 v3 l-5,1 h-10z" fill="#f0c090" stroke="#804020" stroke-width="0.8"/><rect x="216.5" y="80.5" width="3" height="4.5" fill="#603010"/>
<path d="M327,72 q5,-1 7,3 v6 l-2,3 h-5z" fill="#c8c8c8" stroke="#a0a0a0" stroke-width="0.8"/><path d="M321,76 q0,-4 5,-4 q4,0 4.5,4 l1.5,2.5 -1.5,0.5 v2 l-1,1 v2 h-8.5z" fill="#f8d8b8" stroke="#000" stroke-width="1.1"/><rect x="326" y="76.5" width="2" height="1.5" fill="#000"/>
<path d="M410,79 h5 l1,-4 2,8 2,-6 1,2 h5" stroke="#e02020" fill="none" stroke-width="1.5"/><rect x="416" y="73" width="2" height="12" fill="#000"/>
<text x="526" y="84" font-size="12" font-weight="bold" fill="#e02020" font-style="italic">A</text><path d="M534,78 l3,6 3,-6" stroke="#c01010" stroke-width="2" fill="none"/>
<path d="M625,79 l2,-1 2,6 3,-11 h9" stroke="#102870" stroke-width="1.3" fill="none"/><text x="632" y="84" font-size="11" font-weight="bold" style="font-family:'Liberation Serif',serif" fill="#208040" font-style="italic">f</text><rect x="638.5" y="75" width="1.8" height="6" fill="#203020"/><rect x="638.5" y="82.5" width="1.8" height="1.8" fill="#203020"/>
<path d="M723,73 l3,5 h6 l5,-3 v8 l-5,-2 h-6 l-3,3z" fill="#f0d040" stroke="#705000" stroke-width="0.8"/><circle cx="726" cy="82" r="1.5" fill="#f8e060" stroke="#705000" stroke-width="0.6"/>
<rect x="215" y="90" width="12" height="15" fill="#808078" stroke="#404040"/><rect x="217" y="92" width="8" height="5" fill="#60c060"/><circle cx="221" cy="101" r="2" fill="#303030"/>
<path d="M314,90.5 h16" stroke="#e05050" stroke-dasharray="1,1"/><path d="M314,97 h16" stroke="#9080a0" stroke-width="1.2"/><path d="M314,102.5 h16" stroke="#4040c0" stroke-dasharray="1,1"/><path d="M319,103 v-11 h6 v10 h5" stroke="#40d040" fill="none" stroke-width="1.6"/>
<path d="M404,98 l14,-6 v4z" fill="#e04030"/><path d="M404,98 l14,-3 v3z" fill="#f0c020"/><path d="M404,98 h14 v2 h-14z" fill="#40b0e0"/><path d="M403,99 l5,-3 h10" stroke="#80a0c0" fill="none"/>
<rect x="470" y="91" width="17" height="11" rx="4" fill="#f0c0b0" stroke="#a02020" stroke-width="1.5"/><path d="M474,94 v5 M477,94 v5 M480,94 v5 M483,94 v5" stroke="#c02020"/>
<path d="M573.5,103.5 v-5 M576.5,103.5 v-8 M579.5,103.5 v-12 M582.5,103.5 v-14 M585.5,103.5 v-9" stroke="#000" stroke-width="1.3"/>
<rect x="671" y="90" width="15" height="15" fill="#a0c0f0" stroke="#3060c0"/><path d="M674,94 h9 M674,98 h9 M674,102 h9" stroke="#2050b0"/>
<path d="M764,90 h8 l3,3 v12 h-11z" fill="#f8f8f8" stroke="#606880"/><path d="M766,95 h6 M766,98 h6 M766,101 h6" stroke="#909090"/>
<text x="211.6" y="124" font-size="11" fill="#000" font-weight="normal" >Результаты</text>
<rect x="281" y="111" width="1" height="21" fill="#aca899" />
<rect x="282" y="111" width="1" height="21" fill="#ffffff" />
<defs><pattern id="dith" width="2" height="2" patternUnits="userSpaceOnUse"><rect width="2" height="2" fill="#f6f5ee"/><rect width="1" height="1" fill="#ffffff"/><rect x="1" y="1" width="1" height="1" fill="#ffffff"/></pattern></defs>
<rect x="286" y="111" width="68" height="20" fill="url(#dith)" />
<rect x="286" y="111" width="68" height="1" fill="#aca899" />
<rect x="286" y="111" width="1" height="20" fill="#aca899" />
<rect x="287" y="112" width="66" height="1" fill="#d8d4c4" />
<rect x="286" y="130" width="68" height="1" fill="#ffffff" />
<rect x="353" y="111" width="1" height="20" fill="#ffffff" />
<text x="294.7" y="125" font-size="11" fill="#000" font-weight="normal" >Настройки</text>
<rect x="209" y="137" width="145" height="1" fill="#aca899" />
<rect x="209" y="138" width="145" height="1" fill="#ffffff" />
<rect x="209" y="144" width="136" height="1" fill="#aca899" />
<rect x="210" y="145" width="135" height="1" fill="#ffffff" />
<rect x="209" y="144" width="1" height="33" fill="#aca899" />
<rect x="210" y="145" width="1" height="32" fill="#ffffff" />
<rect x="344" y="144" width="1" height="33" fill="#aca899" />
<rect x="345" y="144" width="1" height="34" fill="#ffffff" />
<rect x="209" y="176" width="136" height="1" fill="#aca899" />
<rect x="209" y="177" width="137" height="1" fill="#ffffff" />
<rect x="215" y="142" width="41" height="5" fill="#ece9d8" />
<text x="217.8" y="151" font-size="11" fill="#000" font-weight="normal" >Канал:</text>
<circle cx="224.5" cy="162.5" r="5.5" fill="#ffffff" stroke="#9c9888" stroke-width="1"/><circle cx="224.5" cy="162.5" r="2" fill="#000"/>
<text x="235.5" y="167.5" font-size="11" fill="#000" font-weight="normal" >1</text>
<circle cx="286.5" cy="162.5" r="5.5" fill="#ffffff" stroke="#9c9888" stroke-width="1"/>
<text x="298.4" y="167.5" font-size="11" fill="#000" font-weight="normal" >2</text>
<text x="211" y="196" font-size="11" fill="#000" font-weight="normal" >Отображать</text>
<rect x="211" y="200" width="136" height="20" fill="#ffffff" />
<rect x="211" y="200" width="136" height="1" fill="#8c897c" />
<rect x="211" y="200" width="1" height="20" fill="#8c897c" />
<rect x="211" y="219" width="136" height="1" fill="#d4d0c4" />
<rect x="346" y="200" width="1" height="20" fill="#d4d0c4" />
<rect x="212" y="201" width="134" height="1" fill="#e8e6dc" />
<text x="214" y="212" font-size="11" fill="#000" font-weight="normal" >100</text>
<rect x="329" y="202" width="16" height="8" fill="#ece9d8" />
<rect x="329" y="202" width="16" height="1" fill="#ffffff" />
<rect x="329" y="202" width="1" height="8" fill="#ffffff" />
<rect x="329" y="209" width="16" height="1" fill="#9c9888" />
<rect x="344" y="202" width="1" height="8" fill="#9c9888" />
<path d="M335,207 h4 l-2,-2z" fill="#000"/>
<rect x="329" y="210" width="16" height="8" fill="#ece9d8" />
<rect x="329" y="210" width="16" height="1" fill="#ffffff" />
<rect x="329" y="210" width="1" height="8" fill="#ffffff" />
<rect x="329" y="217" width="16" height="1" fill="#9c9888" />
<rect x="344" y="210" width="1" height="8" fill="#9c9888" />
<path d="M335,213 h4 l-2,2z" fill="#000"/>
<text x="211" y="236" font-size="11" fill="#000" font-weight="normal" >Мин. индекс</text>
<rect x="211" y="240" width="136" height="20" fill="#ffffff" />
<rect x="211" y="240" width="136" height="1" fill="#8c897c" />
<rect x="211" y="240" width="1" height="20" fill="#8c897c" />
<rect x="211" y="259" width="136" height="1" fill="#d4d0c4" />
<rect x="346" y="240" width="1" height="20" fill="#d4d0c4" />
<rect x="212" y="241" width="134" height="1" fill="#e8e6dc" />
<text x="214" y="252" font-size="11" fill="#000" font-weight="normal" >1</text>
<rect x="329" y="242" width="16" height="8" fill="#ece9d8" />
<rect x="329" y="242" width="16" height="1" fill="#ffffff" />
<rect x="329" y="242" width="1" height="8" fill="#ffffff" />
<rect x="329" y="249" width="16" height="1" fill="#9c9888" />
<rect x="344" y="242" width="1" height="8" fill="#9c9888" />
<path d="M335,247 h4 l-2,-2z" fill="#000"/>
<rect x="329" y="250" width="16" height="8" fill="#ece9d8" />
<rect x="329" y="250" width="16" height="1" fill="#ffffff" />
<rect x="329" y="250" width="1" height="8" fill="#ffffff" />
<rect x="329" y="257" width="16" height="1" fill="#9c9888" />
<rect x="344" y="250" width="1" height="8" fill="#9c9888" />
<path d="M335,253 h4 l-2,2z" fill="#000"/>
<rect x="212" y="265" width="11" height="11" fill="#ffffff" />
<rect x="212" y="265" width="11" height="1" fill="#9c9888" />
<rect x="212" y="275" width="11" height="1" fill="#9c9888" />
<rect x="212" y="265" width="1" height="11" fill="#9c9888" />
<rect x="222" y="265" width="1" height="11" fill="#9c9888" />
<path d="M214,270 l2.5,2.5 4.5,-5" stroke="#000" stroke-width="1.8" fill="none"/>
<text x="229" y="274" font-size="11" fill="#000" font-weight="normal" >Автовыбор</text>
<text x="211" y="296" font-size="11" fill="#000" font-weight="normal" >Макс. уровень (лог.)</text>
<rect x="211" y="300" width="136" height="20" fill="#ffffff" />
<rect x="211" y="300" width="136" height="1" fill="#8c897c" />
<rect x="211" y="300" width="1" height="20" fill="#8c897c" />
<rect x="211" y="319" width="136" height="1" fill="#d4d0c4" />
<rect x="346" y="300" width="1" height="20" fill="#d4d0c4" />
<rect x="212" y="301" width="134" height="1" fill="#e8e6dc" />
<text x="214" y="312" font-size="11" fill="#000" font-weight="normal" >28,636 дБ</text>
<rect x="329" y="302" width="16" height="8" fill="#ece9d8" />
<rect x="329" y="302" width="16" height="1" fill="#ffffff" />
<rect x="329" y="302" width="1" height="8" fill="#ffffff" />
<rect x="329" y="309" width="16" height="1" fill="#9c9888" />
<rect x="344" y="302" width="1" height="8" fill="#9c9888" />
<path d="M335,307 h4 l-2,-2z" fill="#000"/>
<rect x="329" y="310" width="16" height="8" fill="#ece9d8" />
<rect x="329" y="310" width="16" height="1" fill="#ffffff" />
<rect x="329" y="310" width="1" height="8" fill="#ffffff" />
<rect x="329" y="317" width="16" height="1" fill="#9c9888" />
<rect x="344" y="310" width="1" height="8" fill="#9c9888" />
<path d="M335,313 h4 l-2,2z" fill="#000"/>
<text x="211" y="336" font-size="11" fill="#000" font-weight="normal" >Мин. уровень (лог.)</text>
<rect x="211" y="340" width="136" height="20" fill="#ffffff" />
<rect x="211" y="340" width="136" height="1" fill="#8c897c" />
<rect x="211" y="340" width="1" height="20" fill="#8c897c" />
<rect x="211" y="359" width="136" height="1" fill="#d4d0c4" />
<rect x="346" y="340" width="1" height="20" fill="#d4d0c4" />
<rect x="212" y="341" width="134" height="1" fill="#e8e6dc" />
<text x="214" y="352" font-size="11" fill="#000" font-weight="normal" >-42,201 дБ</text>
<rect x="329" y="342" width="16" height="8" fill="#ece9d8" />
<rect x="329" y="342" width="16" height="1" fill="#ffffff" />
<rect x="329" y="342" width="1" height="8" fill="#ffffff" />
<rect x="329" y="349" width="16" height="1" fill="#9c9888" />
<rect x="344" y="342" width="1" height="8" fill="#9c9888" />
<path d="M335,347 h4 l-2,-2z" fill="#000"/>
<rect x="329" y="350" width="16" height="8" fill="#ece9d8" />
<rect x="329" y="350" width="16" height="1" fill="#ffffff" />
<rect x="329" y="350" width="1" height="8" fill="#ffffff" />
<rect x="329" y="357" width="16" height="1" fill="#9c9888" />
<rect x="344" y="350" width="1" height="8" fill="#9c9888" />
<path d="M335,353 h4 l-2,2z" fill="#000"/>
<text x="211" y="376" font-size="11" fill="#aca899" font-weight="normal" >Макс. уровень (лин.)</text>
<rect x="211" y="380" width="136" height="20" fill="#ffffff" />
<rect x="211" y="380" width="136" height="1" fill="#8c897c" />
<rect x="211" y="380" width="1" height="20" fill="#8c897c" />
<rect x="211" y="399" width="136" height="1" fill="#d4d0c4" />
<rect x="346" y="380" width="1" height="20" fill="#d4d0c4" />
<rect x="212" y="381" width="134" height="1" fill="#e8e6dc" />
<text x="214" y="392" font-size="11" fill="#aca899" font-weight="normal" >21,676 В</text>
<rect x="329" y="382" width="16" height="8" fill="#ece9d8" />
<rect x="329" y="382" width="16" height="1" fill="#ffffff" />
<rect x="329" y="382" width="1" height="8" fill="#ffffff" />
<rect x="329" y="389" width="16" height="1" fill="#9c9888" />
<rect x="344" y="382" width="1" height="8" fill="#9c9888" />
<path d="M335,387 h4 l-2,-2z" fill="#000"/>
<rect x="329" y="390" width="16" height="8" fill="#ece9d8" />
<rect x="329" y="390" width="16" height="1" fill="#ffffff" />
<rect x="329" y="390" width="1" height="8" fill="#ffffff" />
<rect x="329" y="397" width="16" height="1" fill="#9c9888" />
<rect x="344" y="390" width="1" height="8" fill="#9c9888" />
<path d="M335,393 h4 l-2,2z" fill="#000"/>
<text x="211" y="416" font-size="11" fill="#aca899" font-weight="normal" >Мин. уровень (лин.)</text>
<rect x="211" y="420" width="136" height="20" fill="#ffffff" />
<rect x="211" y="420" width="136" height="1" fill="#8c897c" />
<rect x="211" y="420" width="1" height="20" fill="#8c897c" />
<rect x="211" y="439" width="136" height="1" fill="#d4d0c4" />
<rect x="346" y="420" width="1" height="20" fill="#d4d0c4" />
<rect x="212" y="421" width="134" height="1" fill="#e8e6dc" />
<text x="214" y="432" font-size="11" fill="#aca899" font-weight="normal" >7,6221 мВ</text>
<rect x="329" y="422" width="16" height="8" fill="#ece9d8" />
<rect x="329" y="422" width="16" height="1" fill="#ffffff" />
<rect x="329" y="422" width="1" height="8" fill="#ffffff" />
<rect x="329" y="429" width="16" height="1" fill="#9c9888" />
<rect x="344" y="422" width="1" height="8" fill="#9c9888" />
<path d="M335,427 h4 l-2,-2z" fill="#000"/>
<rect x="329" y="430" width="16" height="8" fill="#ece9d8" />
<rect x="329" y="430" width="16" height="1" fill="#ffffff" />
<rect x="329" y="430" width="1" height="8" fill="#ffffff" />
<rect x="329" y="437" width="16" height="1" fill="#9c9888" />
<rect x="344" y="430" width="1" height="8" fill="#9c9888" />
<path d="M335,433 h4 l-2,2z" fill="#000"/>
<rect x="212" y="445" width="11" height="11" fill="#ffffff" />
<rect x="212" y="445" width="11" height="1" fill="#9c9888" />
<rect x="212" y="455" width="11" height="1" fill="#9c9888" />
<rect x="212" y="445" width="1" height="11" fill="#9c9888" />
<rect x="222" y="445" width="1" height="11" fill="#9c9888" />
<text x="229" y="454" font-size="11" fill="#000" font-weight="normal" >Автовыбор</text>
<text x="211" y="475" font-size="11" fill="#000" font-weight="normal" >Окно:</text>
<rect x="210" y="482" width="138" height="19" fill="#ffffff" />
<rect x="210" y="482" width="138" height="1" fill="#8c897c" />
<rect x="210" y="482" width="1" height="19" fill="#8c897c" />
<rect x="211" y="483" width="137" height="1" fill="#5c5a50" />
<rect x="211" y="483" width="1" height="18" fill="#5c5a50" />
<rect x="210" y="500" width="138" height="1" fill="#ffffff" />
<rect x="347" y="482" width="1" height="19" fill="#ffffff" />
<text x="213.5" y="495.5" font-size="11" fill="#000" font-weight="normal" >Прямоугольное</text>
<rect x="331" y="483" width="16" height="15" fill="#ece9d8" />
<rect x="331" y="483" width="16" height="1" fill="#ffffff" />
<rect x="331" y="483" width="1" height="15" fill="#ffffff" />
<rect x="331" y="497" width="16" height="1" fill="#9c9888" />
<rect x="346" y="483" width="1" height="15" fill="#9c9888" />
<path d="M335,489 h8 l-4,4z" fill="#000"/>
<rect x="373" y="112" width="455" height="31" fill="#ece9d8" />
<rect x="373" y="112" width="455" height="1" fill="#aca899" />
<rect x="373" y="112" width="1" height="31" fill="#aca899" />
<rect x="374" y="113" width="453" height="1" fill="#ffffff" />
<rect x="374" y="113" width="1" height="29" fill="#ffffff" />
<rect x="373" y="142" width="455" height="1" fill="#aca899" />
<rect x="827" y="112" width="1" height="31" fill="#aca899" />
<rect x="377" y="116" width="24" height="24" fill="url(#dith)" />
<rect x="377" y="116" width="24" height="1" fill="#aca899" />
<rect x="377" y="116" width="1" height="24" fill="#aca899" />
<rect x="377" y="139" width="24" height="1" fill="#ffffff" />
<rect x="400" y="116" width="1" height="24" fill="#ffffff" />
<rect x="383.5" y="122.5" width="13.5" height="14" fill="#f4f4e0" stroke="#f0f020" stroke-width="2"/><rect x="385" y="124" width="10.5" height="11" fill="#e8e8d0" stroke="#202000" stroke-width="1"/><path d="M387,134 v-4 M389.5,134 v-6 M392,134 v-8 M394,134 v-3" stroke="#101000" stroke-width="1.4"/><path d="M386,129 h9" stroke="#404000" stroke-width="0.6" stroke-dasharray="1,1"/>
<rect x="405" y="116" width="1" height="24" fill="#aca899" />
<rect x="406" y="116" width="1" height="24" fill="#ffffff" />
<path d="M414,134.5 h16 M414.5,134 l8,-13" stroke="#000" fill="none" stroke-width="1.3"/><path d="M422,129 q-1,-4 3,-5 q4,-1 3,3 q-1,3 -5,3z M424,123 l-2,11" stroke="#000" fill="none" stroke-width="1.1"/><circle cx="429" cy="121.5" r="0.9" fill="#000"/>
<path d="M442.5,135.5 v-14 M445.5,135.5 v-9 M448.5,135.5 v-7 M451.5,135.5 v-5 M454.5,135.5 v-4" stroke="#000" stroke-width="1.3"/>
<rect x="460" y="116" width="24" height="24" fill="url(#dith)" />
<rect x="460" y="116" width="24" height="1" fill="#aca899" />
<rect x="460" y="116" width="1" height="24" fill="#aca899" />
<rect x="460" y="139" width="24" height="1" fill="#ffffff" />
<rect x="483" y="116" width="1" height="24" fill="#ffffff" />
<path d="M471,127 v-3 q0,-3.5 3.5,-3.5 q3.5,0 3.5,3.5 v1" stroke="#a08020" fill="none" stroke-width="1.3"/><rect x="469.5" y="127.5" width="10" height="9" rx="1" fill="#f0cc40" stroke="#a88010"/><path d="M466,119 v3 M464.5,120.5 h3" stroke="#c0a040" stroke-width="0.8"/>
<text x="490" y="132.5" font-size="9.3" fill="#000" font-weight="bold" letter-spacing="-0.2" stroke="#000" stroke-width="0.3">Abs</text>
<rect x="513.5" y="120.5" width="16" height="14" fill="#e8f0fc" stroke="#2050b0"/><rect x="513" y="120" width="17" height="3.5" fill="#2050b0"/><path d="M516,126.5 h11 M516,129.5 h11 M516,132 h11" stroke="#5080d0" stroke-dasharray="2,1"/>
<rect x="538" y="116" width="1" height="24" fill="#aca899" />
<rect x="539" y="116" width="1" height="24" fill="#ffffff" />
<rect x="547" y="122" width="16" height="11" rx="2" fill="#b0b0b0" stroke="#707070"/><circle cx="557" cy="127.5" r="3.5" fill="#606060" stroke="#e0e0e0"/>
<rect x="373" y="149" width="455" height="355" fill="#ece9d8" />
<rect x="373" y="149" width="455" height="1" fill="#aca899" />
<rect x="373" y="149" width="1" height="354" fill="#aca899" />
<rect x="373" y="502" width="456" height="1" fill="#ffffff" />
<rect x="828" y="149" width="1" height="354" fill="#ffffff" />
<rect x="374" y="150" width="454" height="278" fill="#ffffff" />
<rect x="375" y="150" width="452" height="277" fill="#eaffff" />
<rect x="375" y="427" width="452" height="1" fill="#ffffff" />
<rect x="374" y="428" width="454" height="1" fill="#a8a498" />
<rect x="374" y="429" width="454" height="1" fill="#a8a498" />
<rect x="374" y="430" width="454" height="72" fill="#ffffff" />
<rect x="375" y="430" width="452" height="71" fill="#eaffff" />
<path d="M375.00,324H379.52V427H375.00zM379.52,313H384.04V427H379.52zM384.04,300H388.56V427H384.04zM388.56,290H393.08V427H388.56zM393.08,281H397.60V427H393.08zM397.60,274H402.12V427H397.60zM402.12,266H406.64V427H402.12zM406.64,256H411.16V427H406.64zM411.16,245H415.68V427H411.16zM415.68,233H420.20V427H415.68zM420.20,215H424.72V427H420.20zM424.72,184H429.24V427H424.72zM429.24,152H433.76V427H429.24zM433.76,202H438.28V427H433.76zM438.28,220H442.80V427H438.28zM442.80,232H447.32V427H442.80zM447.32,240H451.84V427H447.32zM451.84,361H456.36V427H451.84zM456.36,350H460.88V427H456.36zM460.88,338H465.40V427H460.88zM465.40,325H469.92V427H465.40zM469.92,312H474.44V427H469.92zM474.44,298H478.96V427H474.44zM478.96,284H483.48V427H478.96zM483.48,270H488.00V427H483.48zM488.00,256H492.52V427H488.00zM492.52,240H497.04V427H492.52zM497.04,226H501.56V427H497.04zM501.56,212H506.08V427H501.56zM506.08,197H510.60V427H506.08zM510.60,182H515.12V427H510.60zM515.12,166H519.64V427H515.12zM519.64,150H524.16V427H519.64zM524.16,285H528.68V427H524.16zM528.68,287H533.20V427H528.68zM533.20,289H537.72V427H533.20zM537.72,290H542.24V427H537.72zM542.24,292H546.76V427H542.24zM546.76,292H551.28V427H546.76zM551.28,293H555.80V427H551.28zM555.80,294H560.32V427H555.80zM560.32,295H564.84V427H560.32zM564.84,296H569.36V427H564.84zM569.36,298H573.88V427H569.36zM573.88,299H578.40V427H573.88zM578.40,300H582.92V427H578.40zM582.92,299H587.44V427H582.92zM587.44,300H591.96V427H587.44zM591.96,301H596.48V427H591.96zM596.48,300H601.00V427H596.48zM601.00,302H605.52V427H601.00zM605.52,303H610.04V427H605.52zM610.04,303H614.56V427H610.04zM614.56,303H619.08V427H614.56zM619.08,305H623.60V427H619.08zM623.60,306H628.12V427H623.60zM628.12,307H632.64V427H628.12zM632.64,307H637.16V427H632.64zM637.16,306H641.68V427H637.16zM641.68,308H646.20V427H641.68zM646.20,310H650.72V427H646.20zM650.72,310H655.24V427H650.72zM655.24,312H659.76V427H655.24zM659.76,310H664.28V427H659.76zM664.28,312H668.80V427H664.28zM668.80,312H673.32V427H668.80zM673.32,312H677.84V427H673.32zM677.84,313H682.36V427H677.84zM682.36,313H686.88V427H682.36zM686.88,314H691.40V427H686.88zM691.40,314H695.92V427H691.40zM695.92,316H700.44V427H695.92zM700.44,315H704.96V427H700.44zM704.96,314H709.48V427H704.96zM709.48,316H714.00V427H709.48zM714.00,317H718.52V427H714.00zM718.52,317H723.04V427H718.52zM723.04,318H727.56V427H723.04zM727.56,318H732.08V427H727.56zM732.08,318H736.60V427H732.08zM736.60,320H741.12V427H736.60zM741.12,320H745.64V427H741.12zM745.64,323H750.16V427H745.64zM750.16,322H754.68V427H750.16zM754.68,320H759.20V427H754.68zM759.20,320H763.72V427H759.20zM763.72,320H768.24V427H763.72zM768.24,323H772.76V427H768.24zM772.76,320H777.28V427H772.76zM777.28,324H781.80V427H777.28zM781.80,324H786.32V427H781.80zM786.32,322H790.84V427H786.32zM790.84,326H795.36V427H790.84zM795.36,325H799.88V427H795.36zM799.88,322H804.40V427H799.88zM804.40,325H808.92V427H804.40zM808.92,323H813.44V427H808.92zM813.44,325H817.96V427H813.44zM817.96,324H822.48V427H817.96zM822.48,329H827.00V427H822.48z" fill="#120202" shape-rendering="crispEdges"/>
<path d="M375.00,466H379.52V501H375.00zM379.52,466H384.04V501H379.52zM384.04,466H388.56V501H384.04zM388.56,466H393.08V501H388.56zM393.08,466H397.60V501H393.08zM397.60,466H402.12V501H397.60zM402.12,466H406.64V501H402.12zM406.64,466H411.16V501H406.64zM411.16,466H415.68V501H411.16zM415.68,466H420.20V501H415.68zM420.20,466H424.72V501H420.20zM424.72,466H429.24V501H424.72zM429.24,466H433.76V501H429.24zM433.76,466H438.28V501H433.76zM438.28,466H442.80V501H438.28zM442.80,466H447.32V501H442.80zM447.32,466H451.84V501H447.32zM451.84,488H456.36V501H451.84zM456.36,485H460.88V501H456.36zM460.88,482H465.40V501H460.88zM465.40,479H469.92V501H465.40zM469.92,476H474.44V501H469.92zM474.44,473H478.96V501H474.44zM478.96,470H483.48V501H478.96zM483.48,466H488.00V501H483.48zM488.00,464H492.52V501H488.00zM492.52,461H497.04V501H492.52zM497.04,458H501.56V501H497.04zM501.56,455H506.08V501H501.56zM506.08,452H510.60V501H506.08zM510.60,449H515.12V501H510.60zM515.12,446H519.64V501H515.12zM519.64,442H524.16V501H519.64zM524.16,466H528.68V501H524.16zM528.68,466H533.20V501H528.68zM533.20,466H537.72V501H533.20zM537.72,466H542.24V501H537.72zM542.24,466H546.76V501H542.24zM546.76,466H551.28V501H546.76zM551.28,466H555.80V501H551.28zM555.80,466H560.32V501H555.80zM560.32,466H564.84V501H560.32zM564.84,466H569.36V501H564.84zM569.36,466H573.88V501H569.36zM573.88,466H578.40V501H573.88zM578.40,466H582.92V501H578.40zM582.92,466H587.44V501H582.92zM587.44,466H591.96V501H587.44zM591.96,466H596.48V501H591.96zM596.48,466H601.00V501H596.48zM601.00,466H605.52V501H601.00zM605.52,466H610.04V501H605.52zM610.04,466H614.56V501H610.04zM614.56,466H619.08V501H614.56zM619.08,466H623.60V501H619.08zM623.60,466H628.12V501H623.60zM628.12,466H632.64V501H628.12zM632.64,466H637.16V501H632.64zM637.16,466H641.68V501H637.16zM641.68,466H646.20V501H641.68zM646.20,466H650.72V501H646.20zM650.72,466H655.24V501H650.72zM655.24,466H659.76V501H655.24zM659.76,466H664.28V501H659.76zM664.28,466H668.80V501H664.28zM668.80,466H673.32V501H668.80zM673.32,466H677.84V501H673.32zM677.84,466H682.36V501H677.84zM682.36,466H686.88V501H682.36zM686.88,466H691.40V501H686.88zM691.40,466H695.92V501H691.40zM695.92,466H700.44V501H695.92zM700.44,466H704.96V501H700.44zM704.96,466H709.48V501H704.96zM709.48,466H714.00V501H709.48zM714.00,466H718.52V501H714.00zM718.52,466H723.04V501H718.52zM723.04,466H727.56V501H723.04zM727.56,466H732.08V501H727.56zM732.08,466H736.60V501H732.08zM736.60,466H741.12V501H736.60zM741.12,466H745.64V501H741.12zM745.64,466H750.16V501H745.64zM750.16,466H754.68V501H750.16zM754.68,466H759.20V501H754.68zM759.20,466H763.72V501H759.20zM763.72,466H768.24V501H763.72zM768.24,466H772.76V501H768.24zM772.76,466H777.28V501H772.76zM777.28,466H781.80V501H777.28zM781.80,466H786.32V501H781.80zM786.32,466H790.84V501H786.32zM790.84,466H795.36V501H790.84zM795.36,466H799.88V501H795.36zM799.88,466H804.40V501H799.88zM804.40,466H808.92V501H804.40zM808.92,466H813.44V501H808.92zM813.44,466H817.96V501H813.44zM817.96,466H822.48V501H817.96zM822.48,466H827.00V501H822.48z" fill="#120202" shape-rendering="crispEdges"/>
<path d="M375.00,465H379.52V466H375.00zM379.52,465H384.04V466H379.52zM384.04,465H388.56V466H384.04zM388.56,465H393.08V466H388.56zM393.08,465H397.60V466H393.08zM397.60,465H402.12V466H397.60zM402.12,465H406.64V466H402.12zM406.64,465H411.16V466H406.64zM411.16,465H415.68V466H411.16zM415.68,465H420.20V466H415.68zM420.20,465H424.72V466H420.20zM424.72,465H429.24V466H424.72zM429.24,465H433.76V466H429.24zM433.76,465H438.28V466H433.76zM438.28,465H442.80V466H438.28zM442.80,465H447.32V466H442.80zM447.32,465H451.84V466H447.32zM451.84,465H456.36V466H451.84zM456.36,465H460.88V466H456.36zM460.88,465H465.40V466H460.88zM465.40,465H469.92V466H465.40zM469.92,465H474.44V466H469.92zM474.44,465H478.96V466H474.44zM478.96,465H483.48V466H478.96zM483.48,465H488.00V466H483.48zM524.16,465H528.68V466H524.16zM528.68,465H533.20V466H528.68zM533.20,465H537.72V466H533.20zM537.72,465H542.24V466H537.72zM542.24,465H546.76V466H542.24zM546.76,465H551.28V466H546.76zM551.28,465H555.80V466H551.28zM555.80,465H560.32V466H555.80zM560.32,465H564.84V466H560.32zM564.84,465H569.36V466H564.84zM569.36,465H573.88V466H569.36zM573.88,465H578.40V466H573.88zM578.40,465H582.92V466H578.40zM582.92,465H587.44V466H582.92zM587.44,465H591.96V466H587.44zM591.96,465H596.48V466H591.96zM596.48,465H601.00V466H596.48zM601.00,465H605.52V466H601.00zM605.52,465H610.04V466H605.52zM610.04,465H614.56V466H610.04zM614.56,465H619.08V466H614.56zM619.08,465H623.60V466H619.08zM623.60,465H628.12V466H623.60zM628.12,465H632.64V466H628.12zM632.64,465H637.16V466H632.64zM637.16,465H641.68V466H637.16zM641.68,465H646.20V466H641.68zM646.20,465H650.72V466H646.20zM650.72,465H655.24V466H650.72zM655.24,465H659.76V466H655.24zM659.76,465H664.28V466H659.76zM664.28,465H668.80V466H664.28zM668.80,465H673.32V466H668.80zM673.32,465H677.84V466H673.32zM677.84,465H682.36V466H677.84zM682.36,465H686.88V466H682.36zM686.88,465H691.40V466H686.88zM691.40,465H695.92V466H691.40zM695.92,465H700.44V466H695.92zM700.44,465H704.96V466H700.44zM704.96,465H709.48V466H704.96zM709.48,465H714.00V466H709.48zM714.00,465H718.52V466H714.00zM718.52,465H723.04V466H718.52zM723.04,465H727.56V466H723.04zM727.56,465H732.08V466H727.56zM732.08,465H736.60V466H732.08zM736.60,465H741.12V466H736.60zM741.12,465H745.64V466H741.12zM745.64,465H750.16V466H745.64zM750.16,465H754.68V466H750.16zM754.68,465H759.20V466H754.68zM759.20,465H763.72V466H759.20zM763.72,465H768.24V466H763.72zM768.24,465H772.76V466H768.24zM772.76,465H777.28V466H772.76zM777.28,465H781.80V466H777.28zM781.80,465H786.32V466H781.80zM786.32,465H790.84V466H786.32zM790.84,465H795.36V466H790.84zM795.36,465H799.88V466H795.36zM799.88,465H804.40V466H799.88zM804.40,465H808.92V466H804.40zM808.92,465H813.44V466H808.92zM813.44,465H817.96V466H813.44zM817.96,465H822.48V466H817.96zM822.48,465H827.00V466H822.48zM380,464h1v1h-1zM384,464h1v1h-1zM389,464h1v1h-1zM393,464h1v1h-1zM398,464h1v1h-1zM402,464h1v1h-1zM407,464h1v1h-1zM411,464h1v1h-1zM416,464h1v1h-1zM420,464h1v1h-1zM425,464h1v1h-1zM429,464h1v1h-1zM434,464h1v1h-1zM438,464h1v1h-1zM443,464h1v1h-1zM447,464h1v1h-1zM452,464h1v1h-1zM452,466h1v1h-1zM452,467h1v1h-1zM452,468h1v1h-1zM456,464h1v1h-1zM456,466h1v1h-1zM456,467h1v1h-1zM456,468h1v1h-1zM461,464h1v1h-1zM461,466h1v1h-1zM461,467h1v1h-1zM461,468h1v1h-1zM465,464h1v1h-1zM465,466h1v1h-1zM465,467h1v1h-1zM465,468h1v1h-1zM470,464h1v1h-1zM470,466h1v1h-1zM470,467h1v1h-1zM470,468h1v1h-1zM474,464h1v1h-1zM474,466h1v1h-1zM474,467h1v1h-1zM474,468h1v1h-1zM479,464h1v1h-1zM479,466h1v1h-1zM479,467h1v1h-1zM479,468h1v1h-1zM483,464h1v1h-1zM524,464h1v1h-1zM529,464h1v1h-1zM533,464h1v1h-1zM538,464h1v1h-1zM542,464h1v1h-1zM547,464h1v1h-1zM551,464h1v1h-1zM556,464h1v1h-1zM560,464h1v1h-1zM565,464h1v1h-1zM569,464h1v1h-1zM574,464h1v1h-1zM578,464h1v1h-1zM583,464h1v1h-1zM587,464h1v1h-1zM592,464h1v1h-1zM596,464h1v1h-1zM601,464h1v1h-1zM606,464h1v1h-1zM610,464h1v1h-1zM615,464h1v1h-1zM619,464h1v1h-1zM624,464h1v1h-1zM628,464h1v1h-1zM633,464h1v1h-1zM637,464h1v1h-1zM642,464h1v1h-1zM646,464h1v1h-1zM651,464h1v1h-1zM655,464h1v1h-1zM660,464h1v1h-1zM664,464h1v1h-1zM669,464h1v1h-1zM673,464h1v1h-1zM678,464h1v1h-1zM682,464h1v1h-1zM687,464h1v1h-1zM691,464h1v1h-1zM696,464h1v1h-1zM700,464h1v1h-1zM705,464h1v1h-1zM709,464h1v1h-1zM714,464h1v1h-1zM719,464h1v1h-1zM723,464h1v1h-1zM728,464h1v1h-1zM732,464h1v1h-1zM737,464h1v1h-1zM741,464h1v1h-1zM746,464h1v1h-1zM750,464h1v1h-1zM755,464h1v1h-1zM759,464h1v1h-1zM764,464h1v1h-1zM768,464h1v1h-1zM773,464h1v1h-1zM777,464h1v1h-1zM782,464h1v1h-1zM786,464h1v1h-1zM791,464h1v1h-1zM795,464h1v1h-1zM800,464h1v1h-1zM804,464h1v1h-1zM809,464h1v1h-1zM813,464h1v1h-1zM818,464h1v1h-1zM822,464h1v1h-1z" fill="#000000" shape-rendering="crispEdges"/>
<path d="M488.00,465H492.52V466H488.00zM492.52,465H497.04V466H492.52zM497.04,465H501.56V466H497.04zM501.56,465H506.08V466H501.56zM506.08,465H510.60V466H506.08zM510.60,465H515.12V466H510.60zM515.12,465H519.64V466H515.12zM519.64,465H524.16V466H519.64zM380,466h1v1h-1zM380,467h1v1h-1zM380,468h1v1h-1zM384,466h1v1h-1zM384,467h1v1h-1zM384,468h1v1h-1zM389,466h1v1h-1zM389,467h1v1h-1zM389,468h1v1h-1zM393,466h1v1h-1zM393,467h1v1h-1zM393,468h1v1h-1zM398,466h1v1h-1zM398,467h1v1h-1zM398,468h1v1h-1zM402,466h1v1h-1zM402,467h1v1h-1zM402,468h1v1h-1zM407,466h1v1h-1zM407,467h1v1h-1zM407,468h1v1h-1zM411,466h1v1h-1zM411,467h1v1h-1zM411,468h1v1h-1zM416,466h1v1h-1zM416,467h1v1h-1zM416,468h1v1h-1zM420,466h1v1h-1zM420,467h1v1h-1zM420,468h1v1h-1zM425,466h1v1h-1zM425,467h1v1h-1zM425,468h1v1h-1zM429,466h1v1h-1zM429,467h1v1h-1zM429,468h1v1h-1zM434,466h1v1h-1zM434,467h1v1h-1zM434,468h1v1h-1zM438,466h1v1h-1zM438,467h1v1h-1zM438,468h1v1h-1zM443,466h1v1h-1zM443,467h1v1h-1zM443,468h1v1h-1zM447,466h1v1h-1zM447,467h1v1h-1zM447,468h1v1h-1zM483,466h1v1h-1zM483,467h1v1h-1zM483,468h1v1h-1zM488,464h1v1h-1zM488,466h1v1h-1zM488,467h1v1h-1zM488,468h1v1h-1zM493,464h1v1h-1zM493,466h1v1h-1zM493,467h1v1h-1zM493,468h1v1h-1zM497,464h1v1h-1zM497,466h1v1h-1zM497,467h1v1h-1zM497,468h1v1h-1zM502,464h1v1h-1zM502,466h1v1h-1zM502,467h1v1h-1zM502,468h1v1h-1zM506,464h1v1h-1zM506,466h1v1h-1zM506,467h1v1h-1zM506,468h1v1h-1zM511,464h1v1h-1zM511,466h1v1h-1zM511,467h1v1h-1zM511,468h1v1h-1zM515,464h1v1h-1zM515,466h1v1h-1zM515,467h1v1h-1zM515,468h1v1h-1zM520,464h1v1h-1zM520,466h1v1h-1zM520,467h1v1h-1zM520,468h1v1h-1zM524,466h1v1h-1zM524,467h1v1h-1zM524,468h1v1h-1zM529,466h1v1h-1zM529,467h1v1h-1zM529,468h1v1h-1zM533,466h1v1h-1zM533,467h1v1h-1zM533,468h1v1h-1zM538,466h1v1h-1zM538,467h1v1h-1zM538,468h1v1h-1zM542,466h1v1h-1zM542,467h1v1h-1zM542,468h1v1h-1zM547,466h1v1h-1zM547,467h1v1h-1zM547,468h1v1h-1zM551,466h1v1h-1zM551,467h1v1h-1zM551,468h1v1h-1zM556,466h1v1h-1zM556,467h1v1h-1zM556,468h1v1h-1zM560,466h1v1h-1zM560,467h1v1h-1zM560,468h1v1h-1zM565,466h1v1h-1zM565,467h1v1h-1zM565,468h1v1h-1zM569,466h1v1h-1zM569,467h1v1h-1zM569,468h1v1h-1zM574,466h1v1h-1zM574,467h1v1h-1zM574,468h1v1h-1zM578,466h1v1h-1zM578,467h1v1h-1zM578,468h1v1h-1zM583,466h1v1h-1zM583,467h1v1h-1zM583,468h1v1h-1zM587,466h1v1h-1zM587,467h1v1h-1zM587,468h1v1h-1zM592,466h1v1h-1zM592,467h1v1h-1zM592,468h1v1h-1zM596,466h1v1h-1zM596,467h1v1h-1zM596,468h1v1h-1zM601,466h1v1h-1zM601,467h1v1h-1zM601,468h1v1h-1zM606,466h1v1h-1zM606,467h1v1h-1zM606,468h1v1h-1zM610,466h1v1h-1zM610,467h1v1h-1zM610,468h1v1h-1zM615,466h1v1h-1zM615,467h1v1h-1zM615,468h1v1h-1zM619,466h1v1h-1zM619,467h1v1h-1zM619,468h1v1h-1zM624,466h1v1h-1zM624,467h1v1h-1zM624,468h1v1h-1zM628,466h1v1h-1zM628,467h1v1h-1zM628,468h1v1h-1zM633,466h1v1h-1zM633,467h1v1h-1zM633,468h1v1h-1zM637,466h1v1h-1zM637,467h1v1h-1zM637,468h1v1h-1zM642,466h1v1h-1zM642,467h1v1h-1zM642,468h1v1h-1zM646,466h1v1h-1zM646,467h1v1h-1zM646,468h1v1h-1zM651,466h1v1h-1zM651,467h1v1h-1zM651,468h1v1h-1zM655,466h1v1h-1zM655,467h1v1h-1zM655,468h1v1h-1zM660,466h1v1h-1zM660,467h1v1h-1zM660,468h1v1h-1zM664,466h1v1h-1zM664,467h1v1h-1zM664,468h1v1h-1zM669,466h1v1h-1zM669,467h1v1h-1zM669,468h1v1h-1zM673,466h1v1h-1zM673,467h1v1h-1zM673,468h1v1h-1zM678,466h1v1h-1zM678,467h1v1h-1zM678,468h1v1h-1zM682,466h1v1h-1zM682,467h1v1h-1zM682,468h1v1h-1zM687,466h1v1h-1zM687,467h1v1h-1zM687,468h1v1h-1zM691,466h1v1h-1zM691,467h1v1h-1zM691,468h1v1h-1zM696,466h1v1h-1zM696,467h1v1h-1zM696,468h1v1h-1zM700,466h1v1h-1zM700,467h1v1h-1zM700,468h1v1h-1zM705,466h1v1h-1zM705,467h1v1h-1zM705,468h1v1h-1zM709,466h1v1h-1zM709,467h1v1h-1zM709,468h1v1h-1zM714,466h1v1h-1zM714,467h1v1h-1zM714,468h1v1h-1zM719,466h1v1h-1zM719,467h1v1h-1zM719,468h1v1h-1zM723,466h1v1h-1zM723,467h1v1h-1zM723,468h1v1h-1zM728,466h1v1h-1zM728,467h1v1h-1zM728,468h1v1h-1zM732,466h1v1h-1zM732,467h1v1h-1zM732,468h1v1h-1zM737,466h1v1h-1zM737,467h1v1h-1zM737,468h1v1h-1zM741,466h1v1h-1zM741,467h1v1h-1zM741,468h1v1h-1zM746,466h1v1h-1zM746,467h1v1h-1zM746,468h1v1h-1zM750,466h1v1h-1zM750,467h1v1h-1zM750,468h1v1h-1zM755,466h1v1h-1zM755,467h1v1h-1zM755,468h1v1h-1zM759,466h1v1h-1zM759,467h1v1h-1zM759,468h1v1h-1zM764,466h1v1h-1zM764,467h1v1h-1zM764,468h1v1h-1zM768,466h1v1h-1zM768,467h1v1h-1zM768,468h1v1h-1zM773,466h1v1h-1zM773,467h1v1h-1zM773,468h1v1h-1zM777,466h1v1h-1zM777,467h1v1h-1zM777,468h1v1h-1zM782,466h1v1h-1zM782,467h1v1h-1zM782,468h1v1h-1zM786,466h1v1h-1zM786,467h1v1h-1zM786,468h1v1h-1zM791,466h1v1h-1zM791,467h1v1h-1zM791,468h1v1h-1zM795,466h1v1h-1zM795,467h1v1h-1zM795,468h1v1h-1zM800,466h1v1h-1zM800,467h1v1h-1zM800,468h1v1h-1zM804,466h1v1h-1zM804,467h1v1h-1zM804,468h1v1h-1zM809,466h1v1h-1zM809,467h1v1h-1zM809,468h1v1h-1zM813,466h1v1h-1zM813,467h1v1h-1zM813,468h1v1h-1zM818,466h1v1h-1zM818,467h1v1h-1zM818,468h1v1h-1zM822,466h1v1h-1zM822,467h1v1h-1zM822,468h1v1h-1z" fill="#ffffff" shape-rendering="crispEdges"/>
<rect x="465" y="151" width="1" height="174" fill="#1a1aa0" />
<rect x="375" y="325" width="452" height="1" fill="#e8dc70" />
<rect x="465" y="325" width="1" height="102" fill="#e8dc70" />
<rect x="463" y="323" width="5" height="5" fill="none" stroke="#1a1aa0" stroke-width="1"/>
<rect x="820" y="325" width="7" height="1" fill="#2a2ab0" />
<rect x="520" y="431" width="1" height="14" fill="#1a1aa0" />
<rect x="520" y="445" width="1" height="56" fill="#e8dc70" />
<text transform="translate(238.3,382.8) scale(0.851,1)" font-size="20.5" font-weight="bold" fill="#c00606" stroke="#b00000" stroke-width="0.8" stroke-linejoin="round">Ослабление</text>
<text transform="translate(238.3,401.2) scale(0.841,1)" font-size="20.5" font-weight="bold" fill="#c00606" stroke="#b00000" stroke-width="0.8" stroke-linejoin="round">ряда частот</text>
<text transform="translate(574.3,541.2) scale(0.859,1)" font-size="20.5" font-weight="bold" fill="#c00606" stroke="#b00000" stroke-width="0.8" stroke-linejoin="round">Усиление ряда частот</text>
<path d="M343.4,406.5 L459.2,469.8" stroke="#c00606" stroke-width="2.6"/>
<path d="M475.2,477.5 L461.2,461.6 L459.2,469.8 L454.3,475 Z" fill="#c00606" stroke="#c00606" stroke-width="0.6" stroke-linejoin="round"/>
<path d="M568.3,525.9 L519.8,467.5" stroke="#c00606" stroke-width="2.6"/>
<path d="M508.2,454.5 L526.7,464.2 L519.8,467.5 L515,473.6 Z" fill="#c00606" stroke="#c00606" stroke-width="0.6" stroke-linejoin="round"/></svg></body></html>
